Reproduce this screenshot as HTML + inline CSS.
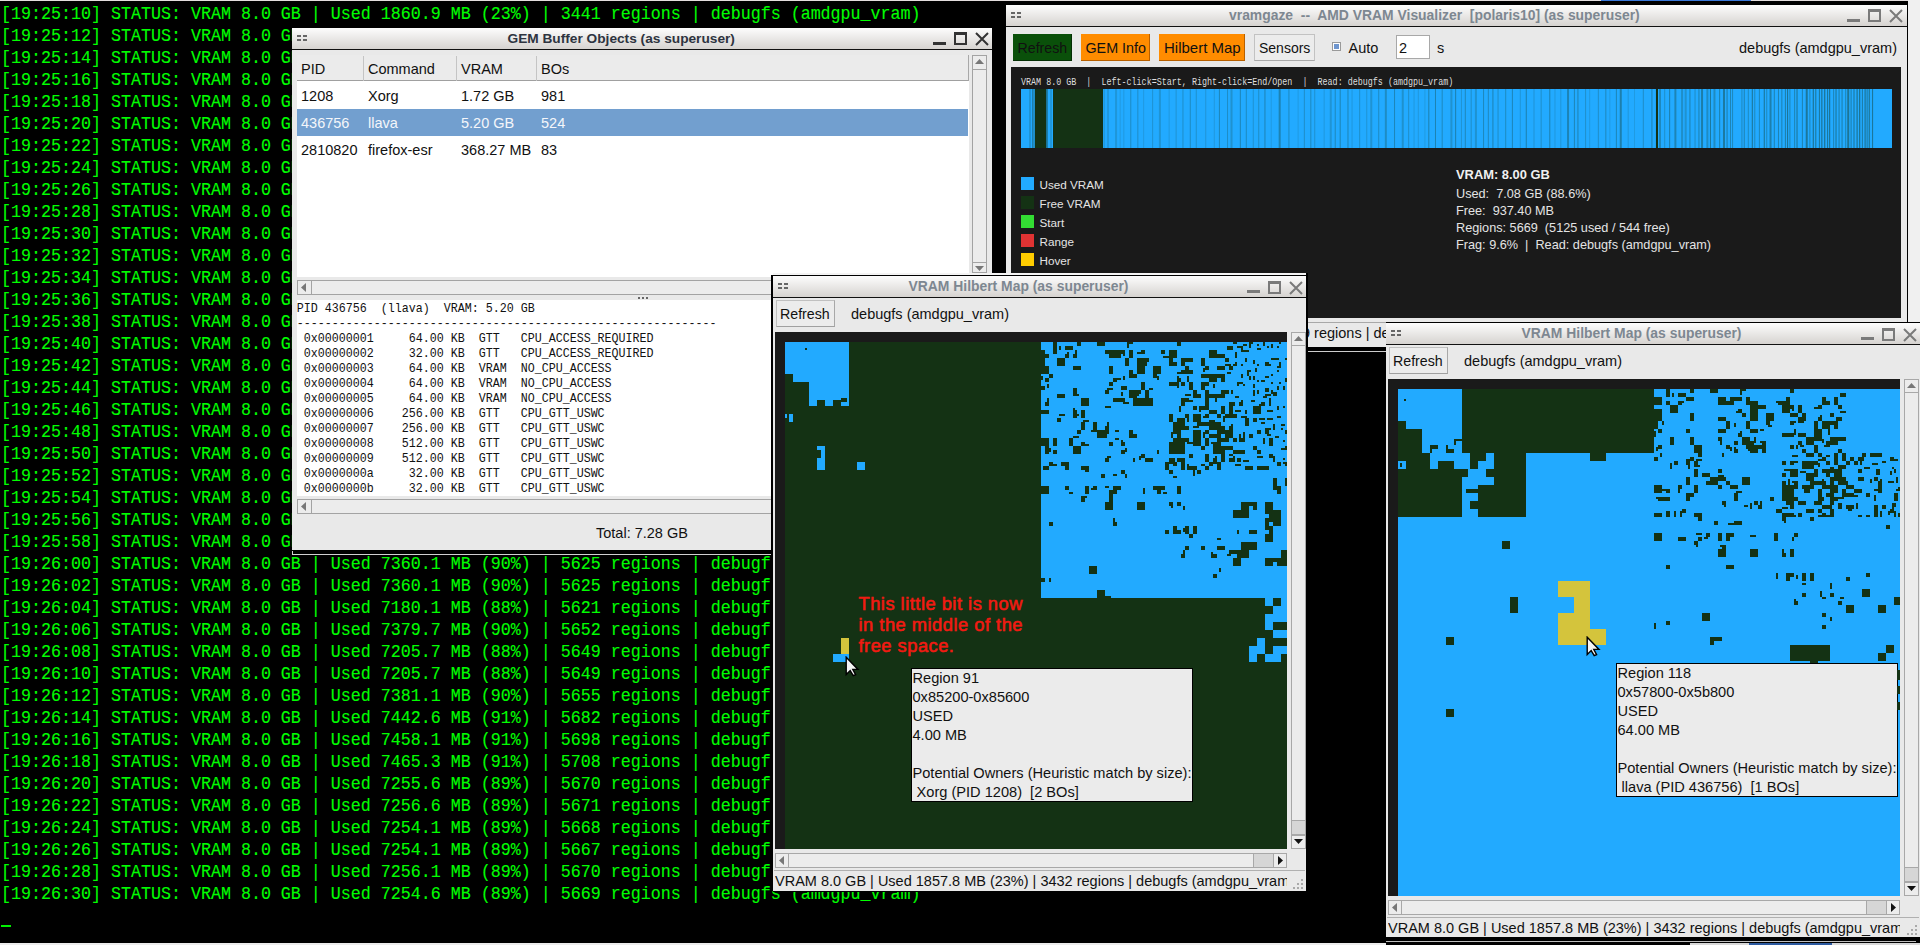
<!DOCTYPE html><html><head><meta charset="utf-8"><style>
*{margin:0;padding:0;box-sizing:border-box}
html,body{width:1920px;height:945px;overflow:hidden;background:#000}
body{position:relative;font-family:"Liberation Sans",sans-serif}
.abs{position:absolute}
.t{position:absolute;white-space:pre}
.m{font-family:"Liberation Mono",monospace}
#term div{position:absolute;left:1px;font-family:"Liberation Mono",monospace;font-size:16.67px;line-height:18.64px;color:#00ff00;white-space:pre;transform:scaleY(1.12);transform-origin:0 13.76px;-webkit-text-stroke:0.1px #00ff00}
.win{position:absolute;background:#e9e9e9;overflow:hidden}
.tb{position:absolute;left:0;right:0;top:0;height:22px;background:linear-gradient(#fdfdfd,#d6d3d0);border-bottom:1px solid #111}
.grip{position:absolute;left:5px;top:7px;width:11px;height:6px}
.grip i{position:absolute;width:4px;height:2px;background:#666}
.sb{position:absolute;background:#ececec;border:1px solid #a3a3a3}
</style></head><body><div id="term"><div style="top:6.48px">[19:25:10] STATUS: VRAM 8.0 GB | Used 1860.9 MB (23%) | 3441 regions | debugfs (amdgpu_vram)</div><div style="top:28.48px">[19:25:12] STATUS: VRAM 8.0 GB | Used 1860.9 MB (23%) | 3441 regions | debugfs (amdgpu_vram)</div><div style="top:50.48px">[19:25:14] STATUS: VRAM 8.0 GB | Used 1860.9 MB (23%) | 3441 regions | debugfs (amdgpu_vram)</div><div style="top:72.48px">[19:25:16] STATUS: VRAM 8.0 GB | Used 1860.9 MB (23%) | 3441 regions | debugfs (amdgpu_vram)</div><div style="top:94.48px">[19:25:18] STATUS: VRAM 8.0 GB | Used 1860.9 MB (23%) | 3441 regions | debugfs (amdgpu_vram)</div><div style="top:116.48px">[19:25:20] STATUS: VRAM 8.0 GB | Used 1860.9 MB (23%) | 3441 regions | debugfs (amdgpu_vram)</div><div style="top:138.48px">[19:25:22] STATUS: VRAM 8.0 GB | Used 1860.9 MB (23%) | 3441 regions | debugfs (amdgpu_vram)</div><div style="top:160.48px">[19:25:24] STATUS: VRAM 8.0 GB | Used 1860.9 MB (23%) | 3441 regions | debugfs (amdgpu_vram)</div><div style="top:182.48px">[19:25:26] STATUS: VRAM 8.0 GB | Used 1860.9 MB (23%) | 3441 regions | debugfs (amdgpu_vram)</div><div style="top:204.48px">[19:25:28] STATUS: VRAM 8.0 GB | Used 1860.9 MB (23%) | 3441 regions | debugfs (amdgpu_vram)</div><div style="top:226.48px">[19:25:30] STATUS: VRAM 8.0 GB | Used 1860.9 MB (23%) | 3441 regions | debugfs (amdgpu_vram)</div><div style="top:248.48px">[19:25:32] STATUS: VRAM 8.0 GB | Used 1860.9 MB (23%) | 3441 regions | debugfs (amdgpu_vram)</div><div style="top:270.48px">[19:25:34] STATUS: VRAM 8.0 GB | Used 1860.9 MB (23%) | 3441 regions | debugfs (amdgpu_vram)</div><div style="top:292.48px">[19:25:36] STATUS: VRAM 8.0 GB | Used 1860.9 MB (23%) | 3441 regions | debugfs (amdgpu_vram)</div><div style="top:314.48px">[19:25:38] STATUS: VRAM 8.0 GB | Used 1860.9 MB (23%) | 3441 regions | debugfs (amdgpu_vram)</div><div style="top:336.48px">[19:25:40] STATUS: VRAM 8.0 GB | Used 1860.9 MB (23%) | 3441 regions | debugfs (amdgpu_vram)</div><div style="top:358.48px">[19:25:42] STATUS: VRAM 8.0 GB | Used 1860.9 MB (23%) | 3441 regions | debugfs (amdgpu_vram)</div><div style="top:380.48px">[19:25:44] STATUS: VRAM 8.0 GB | Used 1860.9 MB (23%) | 3441 regions | debugfs (amdgpu_vram)</div><div style="top:402.48px">[19:25:46] STATUS: VRAM 8.0 GB | Used 1860.9 MB (23%) | 3441 regions | debugfs (amdgpu_vram)</div><div style="top:424.48px">[19:25:48] STATUS: VRAM 8.0 GB | Used 1860.9 MB (23%) | 3441 regions | debugfs (amdgpu_vram)</div><div style="top:446.48px">[19:25:50] STATUS: VRAM 8.0 GB | Used 1860.9 MB (23%) | 3441 regions | debugfs (amdgpu_vram)</div><div style="top:468.48px">[19:25:52] STATUS: VRAM 8.0 GB | Used 1860.9 MB (23%) | 3441 regions | debugfs (amdgpu_vram)</div><div style="top:490.48px">[19:25:54] STATUS: VRAM 8.0 GB | Used 1860.9 MB (23%) | 3441 regions | debugfs (amdgpu_vram)</div><div style="top:512.48px">[19:25:56] STATUS: VRAM 8.0 GB | Used 1860.9 MB (23%) | 3441 regions | debugfs (amdgpu_vram)</div><div style="top:534.48px">[19:25:58] STATUS: VRAM 8.0 GB | Used 1860.9 MB (23%) | 3441 regions | debugfs (amdgpu_vram)</div><div style="top:556.48px">[19:26:00] STATUS: VRAM 8.0 GB | Used 7360.1 MB (90%) | 5625 regions | debugfs (amdgpu_vram)</div><div style="top:578.48px">[19:26:02] STATUS: VRAM 8.0 GB | Used 7360.1 MB (90%) | 5625 regions | debugfs (amdgpu_vram)</div><div style="top:600.48px">[19:26:04] STATUS: VRAM 8.0 GB | Used 7180.1 MB (88%) | 5621 regions | debugfs (amdgpu_vram)</div><div style="top:622.48px">[19:26:06] STATUS: VRAM 8.0 GB | Used 7379.7 MB (90%) | 5652 regions | debugfs (amdgpu_vram)</div><div style="top:644.48px">[19:26:08] STATUS: VRAM 8.0 GB | Used 7205.7 MB (88%) | 5649 regions | debugfs (amdgpu_vram)</div><div style="top:666.48px">[19:26:10] STATUS: VRAM 8.0 GB | Used 7205.7 MB (88%) | 5649 regions | debugfs (amdgpu_vram)</div><div style="top:688.48px">[19:26:12] STATUS: VRAM 8.0 GB | Used 7381.1 MB (90%) | 5655 regions | debugfs (amdgpu_vram)</div><div style="top:710.48px">[19:26:14] STATUS: VRAM 8.0 GB | Used 7442.6 MB (91%) | 5682 regions | debugfs (amdgpu_vram)</div><div style="top:732.48px">[19:26:16] STATUS: VRAM 8.0 GB | Used 7458.1 MB (91%) | 5698 regions | debugfs (amdgpu_vram)</div><div style="top:754.48px">[19:26:18] STATUS: VRAM 8.0 GB | Used 7465.3 MB (91%) | 5708 regions | debugfs (amdgpu_vram)</div><div style="top:776.48px">[19:26:20] STATUS: VRAM 8.0 GB | Used 7255.6 MB (89%) | 5670 regions | debugfs (amdgpu_vram)</div><div style="top:798.48px">[19:26:22] STATUS: VRAM 8.0 GB | Used 7256.6 MB (89%) | 5671 regions | debugfs (amdgpu_vram)</div><div style="top:820.48px">[19:26:24] STATUS: VRAM 8.0 GB | Used 7254.1 MB (89%) | 5668 regions | debugfs (amdgpu_vram)</div><div style="top:842.48px">[19:26:26] STATUS: VRAM 8.0 GB | Used 7254.1 MB (89%) | 5667 regions | debugfs (amdgpu_vram)</div><div style="top:864.48px">[19:26:28] STATUS: VRAM 8.0 GB | Used 7256.1 MB (89%) | 5670 regions | debugfs (amdgpu_vram)</div><div style="top:886.48px">[19:26:30] STATUS: VRAM 8.0 GB | Used 7254.6 MB (89%) | 5669 regions | debugfs (amdgpu_vram)</div></div>
<div class="abs" style="left:1px;top:925px;width:10px;height:1.5px;background:#00f000"></div>
<div class="abs" style="left:0px;top:943px;width:1920px;height:2px;background:#ececec"></div>
<div class="abs" style="left:0px;top:0px;width:1920px;height:1px;background:#e4dede"></div>
<div class="abs" style="left:1601px;top:0px;width:150px;height:1px;background:#3a78d8"></div>
<div class="win" style="left:292px;top:28px;width:700px;height:522px">
<div class="tb" style="height:22px"><div class="grip"><i style="left:0;top:0"></i><i style="left:6px;top:0"></i><i style="left:0;top:4px"></i><i style="left:6px;top:4px"></i></div></div>
<div class="t" style="left:215.5px;top:4.40px;font-size:13.7px;line-height:13.7px;color:#2e3440;font-weight:bold;">GEM Buffer Objects (as superuser)</div>
<div class="abs" style="left:641px;top:14px;width:13px;height:3px;background:#333"></div>
<div class="abs" style="left:662px;top:4px;width:13px;height:13px;border:2px solid #333;border-top-width:3px"></div>
<svg class="abs" style="left:683px;top:4px" width="14" height="14"><path d="M1 1L13 13M13 1L1 13" stroke="#333" stroke-width="2"/></svg>
<div class="abs" style="left:5px;top:27px;width:672px;height:222px;background:#fff"></div>
<div class="abs" style="left:5px;top:27px;width:672px;height:26px;background:#ebebeb;border-bottom:1px solid #a0a0a0;border-right:1px solid #a8a8a8"></div>
<div class="abs" style="left:71px;top:28px;width:1px;height:25px;background:#c4c4c4"></div>
<div class="abs" style="left:164px;top:28px;width:1px;height:25px;background:#c4c4c4"></div>
<div class="abs" style="left:244px;top:28px;width:1px;height:25px;background:#c4c4c4"></div>
<div class="abs" style="left:5px;top:81px;width:671px;height:27px;background:#729fcf"></div>
<div class="t" style="left:9px;top:33.73px;font-size:14.5px;line-height:14.5px;color:#111;font-weight:normal;">PID</div>
<div class="t" style="left:76px;top:33.73px;font-size:14.5px;line-height:14.5px;color:#111;font-weight:normal;">Command</div>
<div class="t" style="left:169px;top:33.73px;font-size:14.5px;line-height:14.5px;color:#111;font-weight:normal;">VRAM</div>
<div class="t" style="left:249px;top:33.73px;font-size:14.5px;line-height:14.5px;color:#111;font-weight:normal;">BOs</div>
<div class="t" style="left:9px;top:60.73px;font-size:14.5px;line-height:14.5px;color:#111;font-weight:normal;">1208</div>
<div class="t" style="left:76px;top:60.73px;font-size:14.5px;line-height:14.5px;color:#111;font-weight:normal;">Xorg</div>
<div class="t" style="left:169px;top:60.73px;font-size:14.5px;line-height:14.5px;color:#111;font-weight:normal;">1.72 GB</div>
<div class="t" style="left:249px;top:60.73px;font-size:14.5px;line-height:14.5px;color:#111;font-weight:normal;">981</div>
<div class="t" style="left:9px;top:87.73px;font-size:14.5px;line-height:14.5px;color:#f4f6fa;font-weight:normal;">436756</div>
<div class="t" style="left:76px;top:87.73px;font-size:14.5px;line-height:14.5px;color:#f4f6fa;font-weight:normal;">llava</div>
<div class="t" style="left:169px;top:87.73px;font-size:14.5px;line-height:14.5px;color:#f4f6fa;font-weight:normal;">5.20 GB</div>
<div class="t" style="left:249px;top:87.73px;font-size:14.5px;line-height:14.5px;color:#f4f6fa;font-weight:normal;">524</div>
<div class="t" style="left:9px;top:114.73px;font-size:14.5px;line-height:14.5px;color:#111;font-weight:normal;">2810820</div>
<div class="t" style="left:76px;top:114.73px;font-size:14.5px;line-height:14.5px;color:#111;font-weight:normal;">firefox-esr</div>
<div class="t" style="left:169px;top:114.73px;font-size:14.5px;line-height:14.5px;color:#111;font-weight:normal;">368.27 MB</div>
<div class="t" style="left:249px;top:114.73px;font-size:14.5px;line-height:14.5px;color:#111;font-weight:normal;">83</div>
<div class="abs" style="left:680px;top:27px;width:15px;height:218px;background:#ececec;border:1px solid #a3a3a3"></div>
<div class="abs" style="left:680px;top:41px;width:15px;height:1px;background:#a3a3a3"></div>
<div class="abs" style="left:680px;top:234px;width:15px;height:1px;background:#a3a3a3"></div>
<svg class="abs" style="left:683px;top:31px" width="9" height="6"><path d="M0 5L4.5 0L9 5Z" fill="#777"/></svg>
<svg class="abs" style="left:683px;top:238px" width="9" height="6"><path d="M0 0L4.5 5L9 0Z" fill="#777"/></svg>
<div class="abs" style="left:5px;top:252px;width:672px;height:15px;background:#ececec;border:1px solid #a3a3a3"></div>
<div class="abs" style="left:19px;top:252px;width:1px;height:15px;background:#a3a3a3"></div>
<svg class="abs" style="left:9px;top:255px" width="6" height="9"><path d="M5 0L0 4.5L5 9Z" fill="#777"/></svg>
<div class="abs" style="left:346px;top:269px;width:2px;height:2px;background:#666"></div>
<div class="abs" style="left:350px;top:269px;width:2px;height:2px;background:#666"></div>
<div class="abs" style="left:354px;top:269px;width:2px;height:2px;background:#666"></div>
<div class="abs" style="left:5px;top:272px;width:480px;height:196px;background:#fff"></div>
<div class="t m" style="left:4.850000000000023px;top:276.36px;font-size:11.67px;line-height:11.67px;color:#111;transform:scaleY(1.1);transform-origin:0 80%">PID 436756  (llava)  VRAM: 5.20 GB</div>
<div class="t m" style="left:4.850000000000023px;top:291.36px;font-size:11.67px;line-height:11.67px;color:#111;transform:scaleY(1.1);transform-origin:0 80%">------------------------------------------------------------</div>
<div class="t m" style="left:4.850000000000023px;top:306.36px;font-size:11.67px;line-height:11.67px;color:#111;transform:scaleY(1.1);transform-origin:0 80%"> 0x00000001     64.00 KB  GTT   CPU_ACCESS_REQUIRED</div>
<div class="t m" style="left:4.850000000000023px;top:321.36px;font-size:11.67px;line-height:11.67px;color:#111;transform:scaleY(1.1);transform-origin:0 80%"> 0x00000002     32.00 KB  GTT   CPU_ACCESS_REQUIRED</div>
<div class="t m" style="left:4.850000000000023px;top:336.36px;font-size:11.67px;line-height:11.67px;color:#111;transform:scaleY(1.1);transform-origin:0 80%"> 0x00000003     64.00 KB  VRAM  NO_CPU_ACCESS</div>
<div class="t m" style="left:4.850000000000023px;top:351.36px;font-size:11.67px;line-height:11.67px;color:#111;transform:scaleY(1.1);transform-origin:0 80%"> 0x00000004     64.00 KB  VRAM  NO_CPU_ACCESS</div>
<div class="t m" style="left:4.850000000000023px;top:366.36px;font-size:11.67px;line-height:11.67px;color:#111;transform:scaleY(1.1);transform-origin:0 80%"> 0x00000005     64.00 KB  VRAM  NO_CPU_ACCESS</div>
<div class="t m" style="left:4.850000000000023px;top:381.36px;font-size:11.67px;line-height:11.67px;color:#111;transform:scaleY(1.1);transform-origin:0 80%"> 0x00000006    256.00 KB  GTT   CPU_GTT_USWC</div>
<div class="t m" style="left:4.850000000000023px;top:396.36px;font-size:11.67px;line-height:11.67px;color:#111;transform:scaleY(1.1);transform-origin:0 80%"> 0x00000007    256.00 KB  GTT   CPU_GTT_USWC</div>
<div class="t m" style="left:4.850000000000023px;top:411.36px;font-size:11.67px;line-height:11.67px;color:#111;transform:scaleY(1.1);transform-origin:0 80%"> 0x00000008    512.00 KB  GTT   CPU_GTT_USWC</div>
<div class="t m" style="left:4.850000000000023px;top:426.36px;font-size:11.67px;line-height:11.67px;color:#111;transform:scaleY(1.1);transform-origin:0 80%"> 0x00000009    512.00 KB  GTT   CPU_GTT_USWC</div>
<div class="t m" style="left:4.850000000000023px;top:441.36px;font-size:11.67px;line-height:11.67px;color:#111;transform:scaleY(1.1);transform-origin:0 80%"> 0x0000000a     32.00 KB  GTT   CPU_GTT_USWC</div>
<div class="t m" style="left:4.850000000000023px;top:456.36px;font-size:11.67px;line-height:11.67px;color:#111;transform:scaleY(1.1);transform-origin:0 80%"> 0x0000000b     32.00 KB  GTT   CPU_GTT_USWC</div>
<div class="abs" style="left:5px;top:471px;width:480px;height:15px;background:#ececec;border:1px solid #a3a3a3"></div>
<div class="abs" style="left:19px;top:471px;width:1px;height:15px;background:#a3a3a3"></div>
<svg class="abs" style="left:9px;top:474px" width="6" height="9"><path d="M5 0L0 4.5L5 9Z" fill="#777"/></svg>
<div class="t" style="left:304px;top:497.73px;font-size:14.5px;line-height:14.5px;color:#111;font-weight:normal;">Total: 7.28 GB</div>
</div>
<div class="abs" style="left:292px;top:550px;width:700px;height:4px;background:#000"></div>
<div class="abs" style="left:292px;top:554px;width:700px;height:1px;background:#d0d0d0"></div>
<div class="abs" style="left:292px;top:551px;width:1px;height:4px;background:#d0d0d0"></div>
<div class="win" style="left:1006px;top:5px;width:901px;height:342px">
<div class="tb" style="height:22px"><div class="grip"><i style="left:0;top:0"></i><i style="left:6px;top:0"></i><i style="left:0;top:4px"></i><i style="left:6px;top:4px"></i></div></div>
<div class="t" style="left:223px;top:4.23px;font-size:13.9px;line-height:13.9px;color:#7d8791;font-weight:bold;">vramgaze  --  AMD VRAM Visualizer  [polaris10] (as superuser)</div>
<div class="abs" style="left:841px;top:14px;width:13px;height:3px;background:#7a7a7a"></div>
<div class="abs" style="left:862px;top:4px;width:13px;height:13px;border:2px solid #7a7a7a;border-top-width:3px"></div>
<svg class="abs" style="left:883px;top:4px" width="14" height="14"><path d="M1 1L13 13M13 1L1 13" stroke="#7a7a7a" stroke-width="2"/></svg>
<div class="abs" style="left:7px;top:29px;width:59px;height:27px;background:#0a500a;border-right:1px solid #053005;border-bottom:1px solid #053005"></div>
<div class="t" style="left:11.5px;top:35.98px;font-size:14.2px;line-height:14.2px;color:#111;font-weight:normal;">Refresh</div>
<div class="abs" style="left:75px;top:29px;width:69px;height:27px;background:#ff8c00;border-right:1px solid #b86000;border-bottom:1px solid #b86000"></div>
<div class="t" style="left:79.5px;top:35.90px;font-size:14.3px;line-height:14.3px;color:#111;font-weight:normal;">GEM Info</div>
<div class="abs" style="left:153px;top:29px;width:86px;height:27px;background:#ff8c00;border-right:1px solid #b86000;border-bottom:1px solid #b86000"></div>
<div class="t" style="left:158px;top:35.30px;font-size:15px;line-height:15px;color:#111;font-weight:normal;">Hilbert Map</div>
<div class="abs" style="left:248px;top:29px;width:61px;height:27px;background:#ececec;border:1px solid #c2c2c2;border-bottom-color:#a8a8a8"></div>
<div class="t" style="left:253px;top:36.15px;font-size:14.0px;line-height:14.0px;color:#111;font-weight:normal;">Sensors</div>
<div class="abs" style="left:326px;top:37px;width:9px;height:9px;background:#fff;border:1px solid #9a9a9a"></div>
<div class="abs" style="left:328px;top:39px;width:5px;height:5px;background:#6f96cf"></div>
<div class="t" style="left:342.5px;top:35.73px;font-size:14.5px;line-height:14.5px;color:#111;font-weight:normal;">Auto</div>
<div class="abs" style="left:390px;top:30px;width:34px;height:24px;background:#fff;border:1px solid #a8a8a8"></div>
<div class="t" style="left:393px;top:35.73px;font-size:14.5px;line-height:14.5px;color:#111;font-weight:normal;">2</div>
<div class="t" style="left:431px;top:35.73px;font-size:14.5px;line-height:14.5px;color:#111;font-weight:normal;">s</div>
<div class="t" style="left:891px;top:35.73px;font-size:14.5px;line-height:14.5px;color:#111;font-weight:normal;transform:translateX(-100%)">debugfs (amdgpu_vram)</div>
<div class="abs" style="left:5px;top:62px;width:890px;height:251px;background:#1a1a1a"></div>
<div class="t m" style="left:15px;top:73.06px;font-size:8.4px;line-height:8.4px;color:#dedede;transform:translateY(0.7px) scaleY(1.25);transform-origin:0 80%">VRAM 8.0 GB  |  Left-click=Start, Right-click=End/Open  |  Read: debugfs (amdgpu_vram)</div>
<svg class="abs" style="left:15px;top:84px" width="871" height="59"><rect x="0" y="0" width="871" height="59" fill="#22aaff"/><rect x="14.00" y="0" width="11.00" height="59" fill="#143214" fill-opacity="1.00"/><rect x="32.00" y="0" width="50.00" height="59" fill="#143214" fill-opacity="1.00"/><rect x="635.00" y="0" width="2.00" height="59" fill="#143214" fill-opacity="1.00"/><rect x="8.50" y="0" width="1.00" height="59" fill="#143214" fill-opacity="0.35"/><rect x="11.00" y="0" width="1.00" height="59" fill="#143214" fill-opacity="0.35"/><rect x="12.50" y="0" width="1.00" height="59" fill="#143214" fill-opacity="0.45"/><rect x="25.00" y="0" width="1.00" height="59" fill="#143214" fill-opacity="0.45"/><rect x="26.00" y="0" width="1.00" height="59" fill="#143214" fill-opacity="0.35"/><rect x="29.50" y="0" width="1.00" height="59" fill="#143214" fill-opacity="0.30"/><rect x="82.65" y="0" width="1.00" height="59" fill="#143214" fill-opacity="0.20"/><rect x="85.99" y="0" width="2.00" height="59" fill="#143214" fill-opacity="0.14"/><rect x="94.07" y="0" width="2.00" height="59" fill="#143214" fill-opacity="0.16"/><rect x="98.67" y="0" width="1.00" height="59" fill="#143214" fill-opacity="0.13"/><rect x="102.30" y="0" width="1.00" height="59" fill="#143214" fill-opacity="0.13"/><rect x="109.26" y="0" width="1.00" height="59" fill="#143214" fill-opacity="0.25"/><rect x="116.34" y="0" width="1.00" height="59" fill="#143214" fill-opacity="0.24"/><rect x="122.12" y="0" width="1.00" height="59" fill="#143214" fill-opacity="0.13"/><rect x="131.13" y="0" width="1.00" height="59" fill="#143214" fill-opacity="0.20"/><rect x="137.91" y="0" width="2.00" height="59" fill="#143214" fill-opacity="0.18"/><rect x="147.62" y="0" width="1.00" height="59" fill="#143214" fill-opacity="0.14"/><rect x="154.62" y="0" width="1.00" height="59" fill="#143214" fill-opacity="0.19"/><rect x="161.46" y="0" width="1.00" height="59" fill="#143214" fill-opacity="0.23"/><rect x="168.79" y="0" width="1.00" height="59" fill="#143214" fill-opacity="0.26"/><rect x="174.78" y="0" width="1.00" height="59" fill="#143214" fill-opacity="0.21"/><rect x="184.25" y="0" width="1.00" height="59" fill="#143214" fill-opacity="0.18"/><rect x="192.81" y="0" width="1.00" height="59" fill="#143214" fill-opacity="0.14"/><rect x="197.91" y="0" width="1.00" height="59" fill="#143214" fill-opacity="0.30"/><rect x="206.02" y="0" width="1.00" height="59" fill="#143214" fill-opacity="0.24"/><rect x="209.53" y="0" width="2.00" height="59" fill="#143214" fill-opacity="0.20"/><rect x="218.83" y="0" width="1.00" height="59" fill="#143214" fill-opacity="0.31"/><rect x="224.78" y="0" width="1.00" height="59" fill="#143214" fill-opacity="0.27"/><rect x="231.79" y="0" width="1.00" height="59" fill="#143214" fill-opacity="0.19"/><rect x="237.24" y="0" width="1.00" height="59" fill="#143214" fill-opacity="0.24"/><rect x="243.44" y="0" width="1.00" height="59" fill="#143214" fill-opacity="0.31"/><rect x="249.75" y="0" width="1.00" height="59" fill="#143214" fill-opacity="0.13"/><rect x="257.67" y="0" width="2.00" height="59" fill="#143214" fill-opacity="0.32"/><rect x="267.42" y="0" width="1.00" height="59" fill="#143214" fill-opacity="0.26"/><rect x="276.63" y="0" width="1.00" height="59" fill="#143214" fill-opacity="0.12"/><rect x="282.86" y="0" width="1.00" height="59" fill="#143214" fill-opacity="0.24"/><rect x="289.32" y="0" width="1.00" height="59" fill="#143214" fill-opacity="0.27"/><rect x="293.22" y="0" width="1.00" height="59" fill="#143214" fill-opacity="0.20"/><rect x="302.64" y="0" width="1.00" height="59" fill="#143214" fill-opacity="0.14"/><rect x="308.78" y="0" width="2.00" height="59" fill="#143214" fill-opacity="0.18"/><rect x="313.74" y="0" width="1.00" height="59" fill="#143214" fill-opacity="0.29"/><rect x="318.69" y="0" width="1.00" height="59" fill="#143214" fill-opacity="0.32"/><rect x="326.47" y="0" width="1.00" height="59" fill="#143214" fill-opacity="0.31"/><rect x="330.53" y="0" width="1.00" height="59" fill="#143214" fill-opacity="0.15"/><rect x="338.14" y="0" width="1.00" height="59" fill="#143214" fill-opacity="0.22"/><rect x="345.26" y="0" width="1.00" height="59" fill="#143214" fill-opacity="0.18"/><rect x="349.28" y="0" width="2.00" height="59" fill="#143214" fill-opacity="0.19"/><rect x="357.24" y="0" width="1.00" height="59" fill="#143214" fill-opacity="0.26"/><rect x="363.85" y="0" width="2.00" height="59" fill="#143214" fill-opacity="0.25"/><rect x="373.03" y="0" width="1.00" height="59" fill="#143214" fill-opacity="0.30"/><rect x="380.75" y="0" width="2.00" height="59" fill="#143214" fill-opacity="0.21"/><rect x="387.14" y="0" width="1.00" height="59" fill="#143214" fill-opacity="0.23"/><rect x="392.55" y="0" width="1.00" height="59" fill="#143214" fill-opacity="0.14"/><rect x="396.80" y="0" width="1.00" height="59" fill="#143214" fill-opacity="0.15"/><rect x="403.40" y="0" width="1.00" height="59" fill="#143214" fill-opacity="0.12"/><rect x="407.31" y="0" width="1.00" height="59" fill="#143214" fill-opacity="0.34"/><rect x="413.99" y="0" width="1.00" height="59" fill="#143214" fill-opacity="0.32"/><rect x="420.68" y="0" width="1.00" height="59" fill="#143214" fill-opacity="0.27"/><rect x="429.41" y="0" width="2.00" height="59" fill="#143214" fill-opacity="0.20"/><rect x="434.15" y="0" width="1.00" height="59" fill="#143214" fill-opacity="0.35"/><rect x="439.94" y="0" width="1.00" height="59" fill="#143214" fill-opacity="0.19"/><rect x="443.81" y="0" width="1.00" height="59" fill="#143214" fill-opacity="0.29"/><rect x="449.68" y="0" width="1.00" height="59" fill="#143214" fill-opacity="0.24"/><rect x="453.91" y="0" width="2.00" height="59" fill="#143214" fill-opacity="0.20"/><rect x="462.05" y="0" width="1.00" height="59" fill="#143214" fill-opacity="0.29"/><rect x="466.84" y="0" width="1.00" height="59" fill="#143214" fill-opacity="0.28"/><rect x="471.41" y="0" width="1.00" height="59" fill="#143214" fill-opacity="0.33"/><rect x="476.54" y="0" width="1.00" height="59" fill="#143214" fill-opacity="0.24"/><rect x="484.21" y="0" width="1.00" height="59" fill="#143214" fill-opacity="0.27"/><rect x="490.89" y="0" width="1.00" height="59" fill="#143214" fill-opacity="0.31"/><rect x="498.80" y="0" width="1.00" height="59" fill="#143214" fill-opacity="0.17"/><rect x="504.76" y="0" width="1.00" height="59" fill="#143214" fill-opacity="0.35"/><rect x="512.50" y="0" width="1.00" height="59" fill="#143214" fill-opacity="0.18"/><rect x="519.66" y="0" width="1.00" height="59" fill="#143214" fill-opacity="0.22"/><rect x="528.28" y="0" width="1.00" height="59" fill="#143214" fill-opacity="0.34"/><rect x="533.47" y="0" width="1.00" height="59" fill="#143214" fill-opacity="0.14"/><rect x="539.29" y="0" width="1.00" height="59" fill="#143214" fill-opacity="0.17"/><rect x="546.03" y="0" width="2.00" height="59" fill="#143214" fill-opacity="0.31"/><rect x="552.91" y="0" width="1.00" height="59" fill="#143214" fill-opacity="0.30"/><rect x="556.42" y="0" width="1.00" height="59" fill="#143214" fill-opacity="0.33"/><rect x="564.11" y="0" width="1.00" height="59" fill="#143214" fill-opacity="0.23"/><rect x="568.18" y="0" width="1.00" height="59" fill="#143214" fill-opacity="0.14"/><rect x="576.86" y="0" width="1.00" height="59" fill="#143214" fill-opacity="0.23"/><rect x="584.32" y="0" width="1.00" height="59" fill="#143214" fill-opacity="0.29"/><rect x="588.34" y="0" width="1.00" height="59" fill="#143214" fill-opacity="0.13"/><rect x="594.88" y="0" width="1.00" height="59" fill="#143214" fill-opacity="0.31"/><rect x="598.76" y="0" width="2.00" height="59" fill="#143214" fill-opacity="0.35"/><rect x="606.70" y="0" width="1.00" height="59" fill="#143214" fill-opacity="0.16"/><rect x="612.99" y="0" width="1.00" height="59" fill="#143214" fill-opacity="0.12"/><rect x="621.82" y="0" width="1.00" height="59" fill="#143214" fill-opacity="0.24"/><rect x="630.42" y="0" width="1.00" height="59" fill="#143214" fill-opacity="0.35"/><rect x="634.59" y="0" width="0.41" height="59" fill="#143214" fill-opacity="0.13"/><rect x="638.00" y="0" width="2.00" height="59" fill="#143214" fill-opacity="0.28"/><rect x="643.18" y="0" width="1.00" height="59" fill="#143214" fill-opacity="0.22"/><rect x="648.14" y="0" width="1.00" height="59" fill="#143214" fill-opacity="0.37"/><rect x="653.40" y="0" width="2.00" height="59" fill="#143214" fill-opacity="0.31"/><rect x="660.07" y="0" width="2.00" height="59" fill="#143214" fill-opacity="0.23"/><rect x="663.68" y="0" width="2.00" height="59" fill="#143214" fill-opacity="0.20"/><rect x="668.44" y="0" width="1.00" height="59" fill="#143214" fill-opacity="0.35"/><rect x="673.54" y="0" width="1.00" height="59" fill="#143214" fill-opacity="0.24"/><rect x="677.44" y="0" width="1.00" height="59" fill="#143214" fill-opacity="0.34"/><rect x="680.04" y="0" width="2.00" height="59" fill="#143214" fill-opacity="0.37"/><rect x="685.37" y="0" width="2.00" height="59" fill="#143214" fill-opacity="0.26"/><rect x="688.94" y="0" width="1.00" height="59" fill="#143214" fill-opacity="0.44"/><rect x="692.46" y="0" width="2.00" height="59" fill="#143214" fill-opacity="0.26"/><rect x="698.15" y="0" width="1.00" height="59" fill="#143214" fill-opacity="0.36"/><rect x="701.98" y="0" width="2.00" height="59" fill="#143214" fill-opacity="0.40"/><rect x="705.58" y="0" width="1.00" height="59" fill="#143214" fill-opacity="0.36"/><rect x="709.18" y="0" width="0.82" height="59" fill="#143214" fill-opacity="0.38"/><rect x="711.05" y="0" width="1.00" height="59" fill="#143214" fill-opacity="0.29"/><rect x="720.41" y="0" width="1.00" height="59" fill="#143214" fill-opacity="0.28"/><rect x="722.77" y="0" width="1.00" height="59" fill="#143214" fill-opacity="0.33"/><rect x="726.78" y="0" width="1.00" height="59" fill="#143214" fill-opacity="0.27"/><rect x="730.79" y="0" width="1.00" height="59" fill="#143214" fill-opacity="0.47"/><rect x="733.26" y="0" width="1.00" height="59" fill="#143214" fill-opacity="0.29"/><rect x="737.90" y="0" width="1.00" height="59" fill="#143214" fill-opacity="0.30"/><rect x="742.76" y="0" width="1.00" height="59" fill="#143214" fill-opacity="0.47"/><rect x="745.25" y="0" width="1.00" height="59" fill="#143214" fill-opacity="0.29"/><rect x="748.54" y="0" width="2.00" height="59" fill="#143214" fill-opacity="0.35"/><rect x="752.81" y="0" width="1.00" height="59" fill="#143214" fill-opacity="0.33"/><rect x="756.97" y="0" width="1.00" height="59" fill="#143214" fill-opacity="0.33"/><rect x="760.35" y="0" width="1.00" height="59" fill="#143214" fill-opacity="0.35"/><rect x="763.90" y="0" width="1.00" height="59" fill="#143214" fill-opacity="0.38"/><rect x="766.10" y="0" width="1.00" height="59" fill="#143214" fill-opacity="0.49"/><rect x="768.41" y="0" width="1.00" height="59" fill="#143214" fill-opacity="0.32"/><rect x="773.13" y="0" width="1.00" height="59" fill="#143214" fill-opacity="0.32"/><rect x="775.52" y="0" width="1.00" height="59" fill="#143214" fill-opacity="0.46"/><rect x="780.89" y="0" width="1.00" height="59" fill="#143214" fill-opacity="0.34"/><rect x="784.73" y="0" width="2.00" height="59" fill="#143214" fill-opacity="0.42"/><rect x="788.38" y="0" width="1.00" height="59" fill="#143214" fill-opacity="0.31"/><rect x="791.76" y="0" width="1.00" height="59" fill="#143214" fill-opacity="0.52"/><rect x="794.30" y="0" width="1.00" height="59" fill="#143214" fill-opacity="0.46"/><rect x="797.90" y="0" width="1.00" height="59" fill="#143214" fill-opacity="0.45"/><rect x="800.35" y="0" width="1.00" height="59" fill="#143214" fill-opacity="0.52"/><rect x="803.25" y="0" width="1.00" height="59" fill="#143214" fill-opacity="0.55"/><rect x="806.09" y="0" width="1.00" height="59" fill="#143214" fill-opacity="0.46"/><rect x="808.18" y="0" width="1.00" height="59" fill="#143214" fill-opacity="0.53"/><rect x="812.11" y="0" width="1.00" height="59" fill="#143214" fill-opacity="0.31"/><rect x="814.52" y="0" width="1.00" height="59" fill="#143214" fill-opacity="0.46"/><rect x="817.58" y="0" width="1.00" height="59" fill="#143214" fill-opacity="0.37"/><rect x="820.58" y="0" width="1.00" height="59" fill="#143214" fill-opacity="0.37"/><rect x="824.19" y="0" width="1.00" height="59" fill="#143214" fill-opacity="0.31"/><rect x="826.22" y="0" width="2.00" height="59" fill="#143214" fill-opacity="0.44"/><rect x="829.60" y="0" width="1.00" height="59" fill="#143214" fill-opacity="0.36"/><rect x="832.50" y="0" width="1.00" height="59" fill="#143214" fill-opacity="0.46"/><rect x="835.59" y="0" width="1.00" height="59" fill="#143214" fill-opacity="0.54"/><rect x="838.21" y="0" width="1.00" height="59" fill="#143214" fill-opacity="0.55"/><rect x="840.89" y="0" width="1.00" height="59" fill="#143214" fill-opacity="0.40"/><rect x="843.59" y="0" width="1.00" height="59" fill="#143214" fill-opacity="0.51"/><rect x="845.61" y="0" width="1.00" height="59" fill="#143214" fill-opacity="0.41"/><rect x="847.73" y="0" width="1.00" height="59" fill="#143214" fill-opacity="0.52"/><rect x="851.07" y="0" width="1.00" height="59" fill="#143214" fill-opacity="0.45"/></svg>
<div class="abs" style="left:15px;top:172px;width:13px;height:13px;background:#22aaff"></div>
<div class="t" style="left:33.5px;top:174.10px;font-size:11.7px;line-height:11.7px;color:#e4e4e4;font-weight:normal;">Used VRAM</div>
<div class="abs" style="left:15px;top:191px;width:13px;height:13px;background:#143214"></div>
<div class="t" style="left:33.5px;top:193.10px;font-size:11.7px;line-height:11.7px;color:#e4e4e4;font-weight:normal;">Free VRAM</div>
<div class="abs" style="left:15px;top:210px;width:13px;height:13px;background:#33dd33"></div>
<div class="t" style="left:33.5px;top:212.10px;font-size:11.7px;line-height:11.7px;color:#e4e4e4;font-weight:normal;">Start</div>
<div class="abs" style="left:15px;top:229px;width:13px;height:13px;background:#e03333"></div>
<div class="t" style="left:33.5px;top:231.10px;font-size:11.7px;line-height:11.7px;color:#e4e4e4;font-weight:normal;">Range</div>
<div class="abs" style="left:15px;top:248px;width:13px;height:13px;background:#ffcc00"></div>
<div class="t" style="left:33.5px;top:250.10px;font-size:11.7px;line-height:11.7px;color:#e4e4e4;font-weight:normal;">Hover</div>
<div class="t" style="left:450px;top:163.58px;font-size:12.9px;line-height:12.9px;color:#f0f0f0;font-weight:bold;">VRAM: 8.00 GB</div>
<div class="t" style="left:450px;top:183.25px;font-size:12.7px;line-height:12.7px;color:#e4e4e4;font-weight:normal;">Used:  7.08 GB (88.6%)</div>
<div class="t" style="left:450px;top:200.25px;font-size:12.7px;line-height:12.7px;color:#e4e4e4;font-weight:normal;">Free:  937.40 MB</div>
<div class="t" style="left:450px;top:217.25px;font-size:12.7px;line-height:12.7px;color:#e4e4e4;font-weight:normal;">Regions: 5669  (5125 used / 544 free)</div>
<div class="t" style="left:450px;top:234.25px;font-size:12.7px;line-height:12.7px;color:#e4e4e4;font-weight:normal;">Frag: 9.6%  |  Read: debugfs (amdgpu_vram)</div>
<div class="abs" style="left:5px;top:317px;width:890px;height:1px;background:#a8a8a8"></div>
<div class="t" style="left:296px;top:320.73px;font-size:14.5px;line-height:14.5px;color:#111;font-weight:normal;">9 regions | debugfs (amdgpu_vram)</div>
</div>
<div class="abs" style="left:1006px;top:347px;width:901px;height:3px;background:#000"></div>
<div class="abs" style="left:1006px;top:351px;width:901px;height:1px;background:#ccc"></div>
<div class="abs" style="left:1908px;top:0px;width:12px;height:322px;background:#f0f0f0"></div>
<div class="abs" style="left:773px;top:273px;width:534px;height:2px;background:#f4f4f4"></div>
<div class="abs" style="left:773px;top:275px;width:534px;height:1px;background:#000"></div>
<div class="abs" style="left:771px;top:275px;width:2px;height:616px;background:#000"></div>
<div class="win" style="left:773px;top:276px;width:533px;height:615px">
<div class="tb" style="height:22px"><div class="grip"><i style="left:0;top:0"></i><i style="left:6px;top:0"></i><i style="left:0;top:4px"></i><i style="left:6px;top:4px"></i></div></div>
<div class="t" style="left:135.5px;top:4.23px;font-size:13.9px;line-height:13.9px;color:#7d8791;font-weight:bold;">VRAM Hilbert Map (as superuser)</div>
<div class="abs" style="left:474px;top:14px;width:13px;height:3px;background:#7a7a7a"></div>
<div class="abs" style="left:495px;top:5px;width:13px;height:13px;border:2px solid #7a7a7a;border-top-width:3px"></div>
<svg class="abs" style="left:516px;top:5px" width="14" height="14"><path d="M1 1L13 13M13 1L1 13" stroke="#7a7a7a" stroke-width="2"/></svg>
<div class="abs" style="left:3px;top:24px;width:59px;height:27px;background:#ececec;border:1px solid #c0c0c0;border-bottom-color:#a0a0a0;border-right-color:#a8a8a8"></div>
<div class="t" style="left:7px;top:30.98px;font-size:14.2px;line-height:14.2px;color:#111;font-weight:normal;">Refresh</div>
<div class="t" style="left:78px;top:30.73px;font-size:14.5px;line-height:14.5px;color:#111;font-weight:normal;">debugfs (amdgpu_vram)</div>
<div class="abs" style="left:2px;top:56px;width:512px;height:517px;background:#1a1a1a"></div>
</div>
<svg class="abs" style="left:785px;top:342px" width="502" height="507" shape-rendering="crispEdges"><rect width="502" height="507" fill="#22aaff"/><path d="M64 0h192v2h-192zM268 0h4v2h-4zM292 0h4v2h-4zM312 0h8v2h-8zM342 0h6v2h-6zM392 0h4v2h-4zM448 0h4v2h-4zM464 0h4v2h-4zM478 0h2v2h-2zM494 0h2v2h-2zM64 2h192v2h-192zM268 2h4v2h-4zM292 2h4v2h-4zM312 2h8v2h-8zM342 2h2v2h-2zM392 2h4v2h-4zM458 2h4v2h-4zM464 2h2v2h-2zM472 2h2v2h-2zM478 2h2v2h-2zM486 2h2v2h-2zM64 4h192v2h-192zM268 4h4v2h-4zM274 4h2v2h-2zM280 4h8v2h-8zM342 4h2v2h-2zM442 4h6v2h-6zM452 4h6v2h-6zM464 4h2v2h-2zM482 4h2v2h-2zM486 4h2v2h-2zM492 4h2v2h-2zM20 6h2v2h-2zM64 6h192v2h-192zM268 6h4v2h-4zM274 6h2v2h-2zM280 6h8v2h-8zM442 6h6v2h-6zM456 6h2v2h-2zM472 6h4v2h-4zM64 8h196v2h-196zM268 8h4v2h-4zM290 8h2v2h-2zM320 8h20v2h-20zM344 8h4v2h-4zM356 8h4v2h-4zM376 8h4v2h-4zM384 8h8v2h-8zM424 8h8v2h-8zM456 8h8v2h-8zM64 10h196v2h-196zM268 10h4v2h-4zM282 10h2v2h-2zM290 10h2v2h-2zM320 10h20v2h-20zM344 10h4v2h-4zM352 10h8v2h-8zM376 10h4v2h-4zM384 10h8v2h-8zM424 10h8v2h-8zM450 10h2v2h-2zM64 12h200v2h-200zM280 12h4v2h-4zM288 12h4v2h-4zM324 12h12v2h-12zM338 12h2v2h-2zM344 12h4v2h-4zM384 12h8v2h-8zM424 12h16v2h-16zM450 12h2v2h-2zM64 14h200v2h-200zM280 14h4v2h-4zM288 14h4v2h-4zM324 14h12v2h-12zM344 14h4v2h-4zM378 14h14v2h-14zM424 14h16v2h-16zM450 14h2v2h-2zM64 16h196v2h-196zM272 16h8v2h-8zM340 16h4v2h-4zM352 16h12v2h-12zM384 16h4v2h-4zM396 16h12v2h-12zM416 16h4v2h-4zM440 16h4v2h-4zM460 16h2v2h-2zM486 16h8v2h-8zM500 16h2v2h-2zM64 18h196v2h-196zM272 18h8v2h-8zM340 18h4v2h-4zM352 18h12v2h-12zM384 18h4v2h-4zM396 18h12v2h-12zM416 18h4v2h-4zM440 18h4v2h-4zM460 18h2v2h-2zM468 18h2v2h-2zM64 20h196v2h-196zM272 20h8v2h-8zM340 20h4v2h-4zM352 20h10v2h-10zM384 20h8v2h-8zM396 20h4v2h-4zM416 20h4v2h-4zM450 20h2v2h-2zM468 20h2v2h-2zM480 20h4v2h-4zM494 20h2v2h-2zM64 22h196v2h-196zM272 22h8v2h-8zM340 22h4v2h-4zM352 22h10v2h-10zM384 22h8v2h-8zM396 22h4v2h-4zM416 22h4v2h-4zM440 22h6v2h-6zM448 22h4v2h-4zM456 22h2v2h-2zM472 22h2v2h-2zM480 22h6v2h-6zM494 22h2v2h-2zM64 24h200v2h-200zM288 24h8v2h-8zM324 24h4v2h-4zM352 24h8v2h-8zM368 24h8v2h-8zM400 24h4v2h-4zM420 24h4v2h-4zM432 24h8v2h-8zM444 24h4v2h-4zM492 24h4v2h-4zM64 26h200v2h-200zM288 26h8v2h-8zM324 26h4v2h-4zM352 26h8v2h-8zM368 26h8v2h-8zM400 26h4v2h-4zM418 26h6v2h-6zM432 26h8v2h-8zM444 26h4v2h-4zM470 26h2v2h-2zM64 28h200v2h-200zM324 28h4v2h-4zM344 28h4v2h-4zM352 28h8v2h-8zM368 28h8v2h-8zM396 28h12v2h-12zM418 28h2v2h-2zM462 28h4v2h-4zM470 28h2v2h-2zM492 28h2v2h-2zM64 30h200v2h-200zM324 30h4v2h-4zM344 30h4v2h-4zM352 30h8v2h-8zM368 30h8v2h-8zM392 30h16v2h-16zM442 30h4v2h-4zM462 30h2v2h-2zM0 32h8v2h-8zM64 32h192v2h-192zM264 32h4v2h-4zM344 32h8v2h-8zM368 32h4v2h-4zM416 32h24v2h-24zM456 32h2v2h-2zM462 32h2v2h-2zM486 32h2v2h-2zM0 34h8v2h-8zM64 34h194v2h-194zM264 34h4v2h-4zM338 34h2v2h-2zM344 34h8v2h-8zM368 34h6v2h-6zM392 34h2v2h-2zM402 34h2v2h-2zM416 34h24v2h-24zM456 34h2v2h-2zM464 34h2v2h-2zM468 34h2v2h-2zM480 34h4v2h-4zM0 36h8v2h-8zM64 36h194v2h-194zM260 36h4v2h-4zM328 36h8v2h-8zM338 36h2v2h-2zM372 36h2v2h-2zM392 36h4v2h-4zM402 36h2v2h-2zM424 36h8v2h-8zM436 36h4v2h-4zM464 36h2v2h-2zM468 36h2v2h-2zM500 36h2v2h-2zM0 38h8v2h-8zM64 38h192v2h-192zM260 38h4v2h-4zM328 38h4v2h-4zM392 38h4v2h-4zM402 38h2v2h-2zM424 38h8v2h-8zM436 38h4v2h-4zM472 38h2v2h-2zM476 38h4v2h-4zM500 38h2v2h-2zM0 40h24v2h-24zM64 40h192v2h-192zM324 40h4v2h-4zM356 40h4v2h-4zM384 40h10v2h-10zM396 40h4v2h-4zM404 40h4v2h-4zM416 40h8v2h-8zM452 40h6v2h-6zM486 40h2v2h-2zM494 40h2v2h-2zM0 42h24v2h-24zM64 42h192v2h-192zM262 42h2v2h-2zM324 42h4v2h-4zM356 42h4v2h-4zM384 42h10v2h-10zM396 42h4v2h-4zM404 42h4v2h-4zM416 42h8v2h-8zM428 42h2v2h-2zM452 42h2v2h-2zM458 42h2v2h-2zM468 42h2v2h-2zM0 44h24v2h-24zM64 44h196v2h-196zM262 44h2v2h-2zM336 44h6v2h-6zM356 44h4v2h-4zM392 44h2v2h-2zM404 44h4v2h-4zM416 44h4v2h-4zM428 44h2v2h-2zM468 44h2v2h-2zM492 44h2v2h-2zM498 44h2v2h-2zM0 46h24v2h-24zM64 46h196v2h-196zM288 46h4v2h-4zM322 46h6v2h-6zM336 46h6v2h-6zM356 46h4v2h-4zM364 46h4v2h-4zM404 46h4v2h-4zM416 46h4v2h-4zM480 46h4v2h-4zM492 46h2v2h-2zM498 46h2v2h-2zM0 48h24v2h-24zM64 48h192v2h-192zM288 48h4v2h-4zM320 48h4v2h-4zM344 48h12v2h-12zM360 48h4v2h-4zM408 48h4v2h-4zM420 48h4v2h-4zM436 48h8v2h-8zM446 48h2v2h-2zM468 48h2v2h-2zM472 48h2v2h-2zM480 48h4v2h-4zM486 48h2v2h-2zM0 50h24v2h-24zM64 50h192v2h-192zM288 50h4v2h-4zM320 50h4v2h-4zM336 50h2v2h-2zM344 50h12v2h-12zM360 50h4v2h-4zM408 50h4v2h-4zM420 50h4v2h-4zM436 50h8v2h-8zM446 50h2v2h-2zM468 50h2v2h-2zM472 50h2v2h-2zM486 50h6v2h-6zM0 52h24v2h-24zM64 52h192v2h-192zM272 52h8v2h-8zM288 52h6v2h-6zM336 52h2v2h-2zM344 52h10v2h-10zM360 52h4v2h-4zM400 52h6v2h-6zM408 52h8v2h-8zM420 52h20v2h-20zM468 52h2v2h-2zM480 52h6v2h-6zM488 52h4v2h-4zM0 54h24v2h-24zM64 54h192v2h-192zM272 54h8v2h-8zM344 54h8v2h-8zM360 54h4v2h-4zM408 54h8v2h-8zM420 54h20v2h-20zM450 54h4v2h-4zM478 54h4v2h-4zM0 56h24v2h-24zM56 56h6v2h-6zM64 56h192v2h-192zM262 56h2v2h-2zM296 56h8v2h-8zM328 56h12v2h-12zM348 56h20v2h-20zM396 56h8v2h-8zM420 56h4v2h-4zM430 56h2v2h-2zM484 56h2v2h-2zM0 58h24v2h-24zM32 58h8v2h-8zM48 58h14v2h-14zM64 58h192v2h-192zM262 58h2v2h-2zM296 58h8v2h-8zM328 58h12v2h-12zM348 58h20v2h-20zM396 58h12v2h-12zM420 58h4v2h-4zM430 58h2v2h-2zM456 58h2v2h-2zM466 58h4v2h-4zM484 58h2v2h-2zM0 60h24v2h-24zM32 60h8v2h-8zM48 60h8v2h-8zM64 60h192v2h-192zM260 60h4v2h-4zM296 60h8v2h-8zM338 60h6v2h-6zM348 60h20v2h-20zM396 60h4v2h-4zM420 60h4v2h-4zM444 60h6v2h-6zM454 60h4v2h-4zM476 60h4v2h-4zM484 60h2v2h-2zM0 62h24v2h-24zM32 62h8v2h-8zM48 62h8v2h-8zM64 62h192v2h-192zM260 62h4v2h-4zM296 62h8v2h-8zM348 62h20v2h-20zM396 62h4v2h-4zM420 62h4v2h-4zM444 62h6v2h-6zM454 62h4v2h-4zM474 62h6v2h-6zM484 62h2v2h-2zM0 64h256v2h-256zM320 64h6v2h-6zM394 64h2v2h-2zM408 64h4v2h-4zM414 64h10v2h-10zM436 64h4v2h-4zM444 64h4v2h-4zM468 64h8v2h-8zM492 64h2v2h-2zM498 64h2v2h-2zM0 66h256v2h-256zM288 66h2v2h-2zM394 66h2v2h-2zM408 66h4v2h-4zM414 66h10v2h-10zM436 66h4v2h-4zM444 66h4v2h-4zM468 66h8v2h-8zM492 66h2v2h-2zM0 68h264v2h-264zM288 68h4v2h-4zM296 68h4v2h-4zM394 68h2v2h-2zM414 68h2v2h-2zM424 68h8v2h-8zM436 68h4v2h-4zM444 68h4v2h-4zM450 68h6v2h-6zM460 68h2v2h-2zM468 68h8v2h-8zM482 68h6v2h-6zM0 70h264v2h-264zM288 70h4v2h-4zM296 70h4v2h-4zM424 70h8v2h-8zM436 70h4v2h-4zM444 70h4v2h-4zM460 70h2v2h-2zM468 70h8v2h-8zM2 72h2v2h-2zM8 72h248v2h-248zM274 72h6v2h-6zM288 72h6v2h-6zM296 72h4v2h-4zM384 72h4v2h-4zM400 72h4v2h-4zM408 72h8v2h-8zM420 72h4v2h-4zM432 72h4v2h-4zM440 72h12v2h-12zM2 74h2v2h-2zM8 74h248v2h-248zM288 74h4v2h-4zM296 74h4v2h-4zM384 74h4v2h-4zM400 74h4v2h-4zM408 74h8v2h-8zM418 74h6v2h-6zM432 74h4v2h-4zM438 74h14v2h-14zM456 74h6v2h-6zM492 74h4v2h-4zM0 76h4v2h-4zM8 76h248v2h-248zM272 76h4v2h-4zM384 76h4v2h-4zM392 76h8v2h-8zM402 76h2v2h-2zM408 76h8v2h-8zM438 76h2v2h-2zM460 76h4v2h-4zM468 76h4v2h-4zM474 76h6v2h-6zM482 76h6v2h-6zM0 78h4v2h-4zM8 78h248v2h-248zM272 78h4v2h-4zM298 78h6v2h-6zM384 78h4v2h-4zM392 78h8v2h-8zM402 78h2v2h-2zM408 78h8v2h-8zM424 78h6v2h-6zM438 78h2v2h-2zM460 78h4v2h-4zM468 78h4v2h-4zM0 80h256v2h-256zM296 80h4v2h-4zM308 80h4v2h-4zM322 80h2v2h-2zM388 80h12v2h-12zM412 80h24v2h-24zM460 80h4v2h-4zM476 80h4v2h-4zM0 82h256v2h-256zM296 82h4v2h-4zM308 82h4v2h-4zM322 82h2v2h-2zM388 82h12v2h-12zM412 82h24v2h-24zM446 82h2v2h-2zM460 82h4v2h-4zM488 82h2v2h-2zM496 82h4v2h-4zM0 84h256v2h-256zM296 84h4v2h-4zM308 84h4v2h-4zM320 84h4v2h-4zM388 84h16v2h-16zM408 84h6v2h-6zM424 84h16v2h-16zM444 84h4v2h-4zM488 84h2v2h-2zM0 86h256v2h-256zM296 86h4v2h-4zM308 86h4v2h-4zM320 86h4v2h-4zM388 86h16v2h-16zM424 86h16v2h-16zM444 86h4v2h-4zM480 86h6v2h-6zM488 86h2v2h-2zM496 86h2v2h-2zM0 88h256v2h-256zM292 88h4v2h-4zM306 88h18v2h-18zM330 88h4v2h-4zM344 88h4v2h-4zM388 88h8v2h-8zM408 88h8v2h-8zM420 88h4v2h-4zM432 88h16v2h-16zM472 88h4v2h-4zM480 88h4v2h-4zM500 88h2v2h-2zM0 90h256v2h-256zM292 90h4v2h-4zM312 90h12v2h-12zM344 90h4v2h-4zM386 90h10v2h-10zM408 90h8v2h-8zM418 90h6v2h-6zM432 90h16v2h-16zM458 90h2v2h-2zM472 90h4v2h-4zM480 90h4v2h-4zM500 90h2v2h-2zM0 92h256v2h-256zM312 92h10v2h-10zM344 92h8v2h-8zM386 92h2v2h-2zM392 92h4v2h-4zM408 92h8v2h-8zM418 92h2v2h-2zM424 92h12v2h-12zM440 92h8v2h-8zM454 92h2v2h-2zM458 92h2v2h-2zM464 92h4v2h-4zM482 92h4v2h-4zM0 94h256v2h-256zM288 94h6v2h-6zM312 94h10v2h-10zM344 94h8v2h-8zM386 94h2v2h-2zM392 94h4v2h-4zM408 94h8v2h-8zM418 94h2v2h-2zM424 94h12v2h-12zM440 94h8v2h-8zM454 94h2v2h-2zM458 94h2v2h-2zM464 94h4v2h-4zM490 94h4v2h-4zM0 96h264v2h-264zM268 96h4v2h-4zM284 96h4v2h-4zM330 96h4v2h-4zM388 96h16v2h-16zM408 96h8v2h-8zM420 96h4v2h-4zM432 96h12v2h-12zM448 96h4v2h-4zM454 96h6v2h-6zM478 96h2v2h-2zM484 96h4v2h-4zM0 98h264v2h-264zM268 98h4v2h-4zM284 98h4v2h-4zM336 98h2v2h-2zM388 98h16v2h-16zM408 98h8v2h-8zM420 98h4v2h-4zM432 98h12v2h-12zM448 98h4v2h-4zM454 98h6v2h-6zM478 98h2v2h-2zM484 98h4v2h-4zM498 98h2v2h-2zM0 100h264v2h-264zM268 100h4v2h-4zM284 100h4v2h-4zM296 100h4v2h-4zM324 100h4v2h-4zM336 100h4v2h-4zM384 100h16v2h-16zM402 100h14v2h-14zM420 100h4v2h-4zM426 100h10v2h-10zM478 100h2v2h-2zM484 100h4v2h-4zM0 102h264v2h-264zM268 102h4v2h-4zM284 102h4v2h-4zM296 102h8v2h-8zM324 102h4v2h-4zM336 102h4v2h-4zM384 102h16v2h-16zM408 102h8v2h-8zM420 102h4v2h-4zM428 102h8v2h-8zM484 102h4v2h-4zM0 104h32v2h-32zM40 104h216v2h-216zM260 104h4v2h-4zM288 104h8v2h-8zM384 104h16v2h-16zM416 104h4v2h-4zM428 104h20v2h-20zM468 104h4v2h-4zM500 104h2v2h-2zM0 106h32v2h-32zM40 106h216v2h-216zM260 106h6v2h-6zM288 106h8v2h-8zM340 106h2v2h-2zM384 106h16v2h-16zM416 106h4v2h-4zM428 106h20v2h-20zM468 106h4v2h-4zM496 106h6v2h-6zM0 108h36v2h-36zM40 108h216v2h-216zM260 108h6v2h-6zM268 108h4v2h-4zM288 108h8v2h-8zM336 108h6v2h-6zM372 108h2v2h-2zM384 108h16v2h-16zM428 108h12v2h-12zM448 108h12v2h-12zM472 108h4v2h-4zM0 110h36v2h-36zM40 110h216v2h-216zM260 110h4v2h-4zM268 110h4v2h-4zM288 110h8v2h-8zM336 110h4v2h-4zM372 110h2v2h-2zM384 110h16v2h-16zM428 110h12v2h-12zM448 110h12v2h-12zM472 110h4v2h-4zM0 112h36v2h-36zM40 112h216v2h-216zM356 112h4v2h-4zM404 112h4v2h-4zM420 112h4v2h-4zM436 112h4v2h-4zM444 112h4v2h-4zM484 112h4v2h-4zM0 114h36v2h-36zM40 114h216v2h-216zM322 114h4v2h-4zM354 114h6v2h-6zM404 114h4v2h-4zM420 114h4v2h-4zM430 114h2v2h-2zM436 114h4v2h-4zM448 114h2v2h-2zM472 114h6v2h-6zM484 114h6v2h-6zM0 116h32v2h-32zM40 116h216v2h-216zM320 116h4v2h-4zM348 116h2v2h-2zM354 116h2v2h-2zM360 116h8v2h-8zM384 116h6v2h-6zM392 116h8v2h-8zM420 116h4v2h-4zM428 116h4v2h-4zM436 116h4v2h-4zM444 116h6v2h-6zM452 116h4v2h-4zM488 116h2v2h-2zM498 116h2v2h-2zM0 118h32v2h-32zM40 118h216v2h-216zM320 118h4v2h-4zM348 118h2v2h-2zM360 118h8v2h-8zM384 118h6v2h-6zM392 118h8v2h-8zM420 118h4v2h-4zM428 118h4v2h-4zM436 118h4v2h-4zM444 118h6v2h-6zM452 118h4v2h-4zM458 118h6v2h-6zM488 118h2v2h-2zM0 120h32v2h-32zM40 120h32v2h-32zM80 120h176v2h-176zM264 120h4v2h-4zM276 120h8v2h-8zM380 120h12v2h-12zM396 120h4v2h-4zM424 120h12v2h-12zM492 120h4v2h-4zM498 120h4v2h-4zM0 122h32v2h-32zM40 122h32v2h-32zM80 122h176v2h-176zM264 122h8v2h-8zM276 122h8v2h-8zM380 122h4v2h-4zM388 122h4v2h-4zM396 122h4v2h-4zM402 122h2v2h-2zM416 122h4v2h-4zM424 122h4v2h-4zM432 122h4v2h-4zM450 122h6v2h-6zM492 122h4v2h-4zM500 122h2v2h-2zM0 124h32v2h-32zM40 124h32v2h-32zM80 124h176v2h-176zM258 124h6v2h-6zM280 124h4v2h-4zM296 124h8v2h-8zM380 124h4v2h-4zM396 124h4v2h-4zM402 124h10v2h-10zM420 124h4v2h-4zM432 124h4v2h-4zM460 124h8v2h-8zM472 124h12v2h-12zM0 126h32v2h-32zM40 126h32v2h-32zM80 126h176v2h-176zM258 126h6v2h-6zM280 126h4v2h-4zM296 126h8v2h-8zM380 126h4v2h-4zM396 126h4v2h-4zM402 126h10v2h-10zM420 126h4v2h-4zM432 126h4v2h-4zM460 126h8v2h-8zM472 126h12v2h-12zM0 128h256v2h-256zM300 128h4v2h-4zM336 128h4v2h-4zM384 128h4v2h-4zM408 128h2v2h-2zM412 128h4v2h-4zM0 130h256v2h-256zM336 130h4v2h-4zM384 130h4v2h-4zM408 130h2v2h-2zM412 130h4v2h-4zM0 132h256v2h-256zM316 132h4v2h-4zM328 132h4v2h-4zM340 132h2v2h-2zM408 132h2v2h-2zM0 134h256v2h-256zM316 134h4v2h-4zM340 134h2v2h-2zM388 134h4v2h-4zM0 136h256v2h-256zM488 136h4v2h-4zM500 136h2v2h-2zM0 138h256v2h-256zM488 138h4v2h-4zM500 138h2v2h-2zM0 140h256v2h-256zM488 140h4v2h-4zM500 140h2v2h-2zM0 142h256v2h-256zM488 142h4v2h-4zM500 142h2v2h-2zM0 144h264v2h-264zM280 144h4v2h-4zM300 144h4v2h-4zM308 144h4v2h-4zM320 144h4v2h-4zM328 144h8v2h-8zM368 144h12v2h-12zM392 144h4v2h-4zM488 144h8v2h-8zM0 146h264v2h-264zM280 146h4v2h-4zM300 146h4v2h-4zM306 146h6v2h-6zM328 146h8v2h-8zM358 146h2v2h-2zM368 146h12v2h-12zM392 146h4v2h-4zM488 146h8v2h-8zM0 148h264v2h-264zM300 148h4v2h-4zM324 148h8v2h-8zM358 148h2v2h-2zM372 148h4v2h-4zM392 148h4v2h-4zM492 148h4v2h-4zM0 150h264v2h-264zM284 150h4v2h-4zM300 150h4v2h-4zM324 150h8v2h-8zM358 150h2v2h-2zM372 150h4v2h-4zM378 150h4v2h-4zM392 150h4v2h-4zM492 150h4v2h-4zM0 152h256v2h-256zM324 152h4v2h-4zM0 154h256v2h-256zM296 154h6v2h-6zM324 154h4v2h-4zM0 156h256v2h-256zM296 156h4v2h-4zM324 156h4v2h-4zM0 158h256v2h-256zM296 158h4v2h-4zM324 158h4v2h-4zM0 160h256v2h-256zM320 160h8v2h-8zM352 160h8v2h-8zM384 160h4v2h-4zM392 160h4v2h-4zM456 160h16v2h-16zM480 160h8v2h-8zM0 162h256v2h-256zM320 162h8v2h-8zM352 162h8v2h-8zM384 162h4v2h-4zM392 162h4v2h-4zM456 162h16v2h-16zM480 162h8v2h-8zM0 164h256v2h-256zM320 164h8v2h-8zM352 164h8v2h-8zM386 164h2v2h-2zM398 164h2v2h-2zM456 164h8v2h-8zM468 164h4v2h-4zM480 164h8v2h-8zM0 166h256v2h-256zM320 166h8v2h-8zM352 166h8v2h-8zM398 166h2v2h-2zM456 166h8v2h-8zM468 166h4v2h-4zM480 166h8v2h-8zM0 168h256v2h-256zM448 168h16v2h-16zM480 168h16v2h-16zM0 170h256v2h-256zM448 170h16v2h-16zM480 170h16v2h-16zM0 172h256v2h-256zM448 172h16v2h-16zM484 172h12v2h-12zM0 174h256v2h-256zM448 174h16v2h-16zM484 174h12v2h-12zM0 176h256v2h-256zM328 176h2v2h-2zM480 176h16v2h-16zM0 178h256v2h-256zM328 178h2v2h-2zM480 178h16v2h-16zM0 180h256v2h-256zM264 180h4v2h-4zM328 180h4v2h-4zM480 180h4v2h-4zM488 180h8v2h-8zM0 182h256v2h-256zM264 182h4v2h-4zM328 182h4v2h-4zM480 182h4v2h-4zM488 182h8v2h-8zM0 184h256v2h-256zM388 184h4v2h-4zM400 184h4v2h-4zM408 184h4v2h-4zM480 184h8v2h-8zM0 186h256v2h-256zM388 186h4v2h-4zM398 186h6v2h-6zM408 186h4v2h-4zM480 186h8v2h-8zM0 188h256v2h-256zM380 188h4v2h-4zM388 188h8v2h-8zM398 188h6v2h-6zM408 188h4v2h-4zM452 188h2v2h-2zM464 188h8v2h-8zM484 188h4v2h-4zM0 190h256v2h-256zM380 190h4v2h-4zM388 190h8v2h-8zM400 190h4v2h-4zM408 190h4v2h-4zM452 190h2v2h-2zM464 190h8v2h-8zM484 190h4v2h-4zM0 192h256v2h-256zM404 192h4v2h-4zM480 192h8v2h-8zM0 194h256v2h-256zM404 194h4v2h-4zM480 194h8v2h-8zM0 196h256v2h-256zM432 196h4v2h-4zM480 196h8v2h-8zM0 198h256v2h-256zM480 198h8v2h-8zM0 200h256v2h-256zM456 200h16v2h-16zM0 202h256v2h-256zM456 202h16v2h-16zM0 204h256v2h-256zM400 204h4v2h-4zM416 204h4v2h-4zM432 204h8v2h-8zM456 204h16v2h-16zM0 206h256v2h-256zM400 206h4v2h-4zM416 206h4v2h-4zM432 206h8v2h-8zM456 206h16v2h-16zM0 208h256v2h-256zM398 208h2v2h-2zM444 208h20v2h-20zM496 208h6v2h-6zM0 210h256v2h-256zM398 210h2v2h-2zM426 210h2v2h-2zM444 210h20v2h-20zM496 210h6v2h-6zM0 212h256v2h-256zM396 212h4v2h-4zM426 212h6v2h-6zM442 212h4v2h-4zM452 212h12v2h-12zM496 212h6v2h-6zM0 214h256v2h-256zM396 214h4v2h-4zM426 214h6v2h-6zM452 214h12v2h-12zM496 214h6v2h-6zM0 216h256v2h-256zM448 216h8v2h-8zM480 216h22v2h-22zM0 218h256v2h-256zM448 218h8v2h-8zM480 218h22v2h-22zM0 220h256v2h-256zM448 220h8v2h-8zM480 220h8v2h-8zM492 220h10v2h-10zM0 222h256v2h-256zM448 222h8v2h-8zM480 222h8v2h-8zM492 222h10v2h-10zM0 224h256v2h-256zM304 224h8v2h-8zM0 226h256v2h-256zM304 226h8v2h-8zM434 226h2v2h-2zM0 228h256v2h-256zM304 228h8v2h-8zM434 228h2v2h-2zM0 230h256v2h-256zM304 230h8v2h-8zM0 232h256v2h-256zM428 232h4v2h-4zM0 234h256v2h-256zM428 234h4v2h-4zM0 236h260v2h-260zM264 236h2v2h-2zM0 238h260v2h-260zM264 238h2v2h-2zM0 240h256v2h-256zM0 242h256v2h-256zM0 244h256v2h-256zM0 246h256v2h-256zM0 248h256v2h-256zM312 248h8v2h-8zM0 250h256v2h-256zM312 250h8v2h-8zM0 252h256v2h-256zM312 252h8v2h-8zM0 254h256v2h-256zM312 254h14v2h-14zM0 256h480v2h-480zM488 256h8v2h-8zM0 258h480v2h-480zM488 258h8v2h-8zM0 260h480v2h-480zM488 260h8v2h-8zM0 262h480v2h-480zM488 262h8v2h-8zM0 264h488v2h-488zM0 266h488v2h-488zM0 268h488v2h-488zM0 270h488v2h-488zM0 272h480v2h-480zM0 274h480v2h-480zM0 276h480v2h-480zM0 278h480v2h-480zM0 280h480v2h-480zM488 280h14v2h-14zM0 282h480v2h-480zM488 282h14v2h-14zM0 284h480v2h-480zM488 284h14v2h-14zM0 286h480v2h-480zM488 286h14v2h-14zM0 288h488v2h-488zM0 290h488v2h-488zM0 292h488v2h-488zM0 294h488v2h-488zM0 296h472v2h-472zM480 296h22v2h-22zM0 298h472v2h-472zM480 298h22v2h-22zM0 300h472v2h-472zM480 300h22v2h-22zM0 302h472v2h-472zM480 302h22v2h-22zM0 304h464v2h-464zM480 304h8v2h-8zM0 306h464v2h-464zM480 306h8v2h-8zM0 308h464v2h-464zM480 308h8v2h-8zM0 310h464v2h-464zM480 310h8v2h-8zM0 312h48v2h-48zM64 312h400v2h-400zM472 312h8v2h-8zM496 312h6v2h-6zM0 314h48v2h-48zM64 314h400v2h-400zM472 314h8v2h-8zM496 314h6v2h-6zM0 316h48v2h-48zM64 316h400v2h-400zM472 316h8v2h-8zM496 316h6v2h-6zM0 318h48v2h-48zM64 318h400v2h-400zM472 318h8v2h-8zM496 318h6v2h-6zM0 320h502v2h-502zM0 322h502v2h-502zM0 324h502v2h-502zM0 326h502v2h-502zM0 328h502v2h-502zM0 330h502v2h-502zM0 332h502v2h-502zM0 334h502v2h-502zM0 336h502v2h-502zM0 338h502v2h-502zM0 340h502v2h-502zM0 342h502v2h-502zM0 344h502v2h-502zM0 346h502v2h-502zM0 348h502v2h-502zM0 350h502v2h-502zM0 352h502v2h-502zM0 354h502v2h-502zM0 356h502v2h-502zM0 358h502v2h-502zM0 360h502v2h-502zM0 362h502v2h-502zM0 364h502v2h-502zM0 366h502v2h-502zM0 368h502v2h-502zM0 370h502v2h-502zM0 372h502v2h-502zM0 374h502v2h-502zM0 376h502v2h-502zM0 378h502v2h-502zM0 380h502v2h-502zM0 382h502v2h-502zM0 384h502v2h-502zM0 386h502v2h-502zM0 388h502v2h-502zM0 390h502v2h-502zM0 392h502v2h-502zM0 394h502v2h-502zM0 396h502v2h-502zM0 398h502v2h-502zM0 400h502v2h-502zM0 402h502v2h-502zM0 404h502v2h-502zM0 406h502v2h-502zM0 408h502v2h-502zM0 410h502v2h-502zM0 412h502v2h-502zM0 414h502v2h-502zM0 416h502v2h-502zM0 418h502v2h-502zM0 420h502v2h-502zM0 422h502v2h-502zM0 424h502v2h-502zM0 426h502v2h-502zM0 428h502v2h-502zM0 430h502v2h-502zM0 432h502v2h-502zM0 434h502v2h-502zM0 436h502v2h-502zM0 438h502v2h-502zM0 440h502v2h-502zM0 442h502v2h-502zM0 444h502v2h-502zM0 446h502v2h-502zM0 448h502v2h-502zM0 450h502v2h-502zM0 452h502v2h-502zM0 454h502v2h-502zM0 456h502v2h-502zM0 458h502v2h-502zM0 460h502v2h-502zM0 462h502v2h-502zM0 464h502v2h-502zM0 466h502v2h-502zM0 468h502v2h-502zM0 470h502v2h-502zM0 472h502v2h-502zM0 474h502v2h-502zM0 476h502v2h-502zM0 478h502v2h-502zM0 480h502v2h-502zM0 482h502v2h-502zM0 484h502v2h-502zM0 486h502v2h-502zM0 488h502v2h-502zM0 490h502v2h-502zM0 492h502v2h-502zM0 494h502v2h-502zM0 496h502v2h-502zM0 498h502v2h-502zM0 500h502v2h-502zM0 502h502v2h-502zM0 504h502v2h-502zM0 506h502v2h-502z" fill="#143214"/><rect x="56" y="296" width="8" height="16" fill="#d4c43c"/></svg>
<div class="abs" style="left:1291px;top:332px;width:15px;height:517px;background:#ececec;border:1px solid #a8a8a8"></div>
<div class="abs" style="left:1291px;top:345px;width:15px;height:1px;background:#a8a8a8"></div>
<div class="abs" style="left:1291px;top:820px;width:15px;height:15px;background:#d6d6d6;border:1px solid #a8a8a8"></div>
<div class="abs" style="left:1291px;top:835px;width:15px;height:1px;background:#a8a8a8"></div>
<svg class="abs" style="left:1294px;top:336px" width="9" height="6"><path d="M0 5L4.5 0L9 5Z" fill="#777"/></svg>
<svg class="abs" style="left:1294px;top:839px" width="9" height="6"><path d="M0 0L4.5 5L9 0Z" fill="#111"/></svg>
<div class="abs" style="left:775px;top:853px;width:512px;height:15px;background:#ececec;border:1px solid #a8a8a8"></div>
<div class="abs" style="left:788px;top:853px;width:1px;height:15px;background:#a8a8a8"></div>
<div class="abs" style="left:1253px;top:853px;width:21px;height:15px;background:#d6d6d6;border:1px solid #a8a8a8"></div>
<svg class="abs" style="left:779px;top:856px" width="6" height="9"><path d="M5 0L0 4.5L5 9Z" fill="#777"/></svg>
<svg class="abs" style="left:1278px;top:856px" width="6" height="9"><path d="M0 0L5 4.5L0 9Z" fill="#111"/></svg>
<div class="abs" style="left:774px;top:870px;width:531px;height:1px;background:#b0b0b0"></div>
<div class="abs" style="left:775px;top:871px;width:512px;height:20px;overflow:hidden"><div class="t" style="left:0px;top:2.73px;font-size:14.5px;line-height:14.5px;color:#111;font-weight:normal;">VRAM 8.0 GB | Used 1857.8 MB (23%) | 3432 regions | debugfs (amdgpu_vram)</div></div>
<div class="abs" style="left:1301px;top:879px;width:2px;height:2px;background:#a9a9a9"></div>
<div class="abs" style="left:1301px;top:883px;width:2px;height:2px;background:#a9a9a9"></div>
<div class="abs" style="left:1297px;top:883px;width:2px;height:2px;background:#a9a9a9"></div>
<div class="abs" style="left:1301px;top:887px;width:2px;height:2px;background:#a9a9a9"></div>
<div class="abs" style="left:1297px;top:887px;width:2px;height:2px;background:#a9a9a9"></div>
<div class="abs" style="left:1293px;top:887px;width:2px;height:2px;background:#a9a9a9"></div>
<div class="abs" style="left:911px;top:668px;width:282px;height:134px;background:#ebebeb;border:1px solid #000"></div>
<div class="t" style="left:912.5px;top:670.64px;font-size:14.6px;line-height:14.6px;color:#111;font-weight:normal;">Region 91</div>
<div class="t" style="left:912.5px;top:689.64px;font-size:14.6px;line-height:14.6px;color:#111;font-weight:normal;">0x85200-0x85600</div>
<div class="t" style="left:912.5px;top:708.64px;font-size:14.6px;line-height:14.6px;color:#111;font-weight:normal;">USED</div>
<div class="t" style="left:912.5px;top:727.64px;font-size:14.6px;line-height:14.6px;color:#111;font-weight:normal;">4.00 MB</div>
<div class="t" style="left:912.5px;top:765.64px;font-size:14.6px;line-height:14.6px;color:#111;font-weight:normal;">Potential Owners (Heuristic match by size):</div>
<div class="t" style="left:912.5px;top:784.64px;font-size:14.6px;line-height:14.6px;color:#111;font-weight:normal;"> Xorg (PID 1208)  [2 BOs]</div>
<svg class="abs" style="left:845px;top:656px" width="16" height="22"><path d="M1.2 1.2L1.2 18.5L5.2 14.6L8.2 19.6L10.6 18.6L7.8 13.4L13 13.4Z" fill="#f4f4f4" stroke="#000" stroke-width="1.4" stroke-linejoin="miter"/></svg>
<div class="t" style="left:858.5px;top:594.51px;font-size:18.3px;line-height:18.3px;color:#f21a12;font-weight:normal;letter-spacing:0.5px;-webkit-text-stroke:0.55px #f21a12">This little bit is now</div>
<div class="t" style="left:858.5px;top:615.51px;font-size:18.3px;line-height:18.3px;color:#f21a12;font-weight:normal;letter-spacing:0.5px;-webkit-text-stroke:0.55px #f21a12">in the middle of the</div>
<div class="t" style="left:858.5px;top:636.51px;font-size:18.3px;line-height:18.3px;color:#f21a12;font-weight:normal;letter-spacing:0.5px;-webkit-text-stroke:0.55px #f21a12">free space.</div>
<div class="abs" style="left:773px;top:891px;width:534px;height:1px;background:#000"></div>
<div class="abs" style="left:1306px;top:273px;width:2px;height:618px;background:#000"></div>
<div class="abs" style="left:1386px;top:322px;width:534px;height:1px;background:#000"></div>
<div class="win" style="left:1386px;top:323px;width:534px;height:614px">
<div class="tb" style="height:22px"><div class="grip"><i style="left:0;top:0"></i><i style="left:6px;top:0"></i><i style="left:0;top:4px"></i><i style="left:6px;top:4px"></i></div></div>
<div class="t" style="left:135.5px;top:4.23px;font-size:13.9px;line-height:13.9px;color:#7d8791;font-weight:bold;">VRAM Hilbert Map (as superuser)</div>
<div class="abs" style="left:475px;top:14px;width:13px;height:3px;background:#7a7a7a"></div>
<div class="abs" style="left:496px;top:5px;width:13px;height:13px;border:2px solid #7a7a7a;border-top-width:3px"></div>
<svg class="abs" style="left:517px;top:5px" width="14" height="14"><path d="M1 1L13 13M13 1L1 13" stroke="#7a7a7a" stroke-width="2"/></svg>
<div class="abs" style="left:3px;top:24px;width:59px;height:27px;background:#ececec;border:1px solid #c0c0c0;border-bottom-color:#a0a0a0;border-right-color:#a8a8a8"></div>
<div class="t" style="left:7px;top:30.98px;font-size:14.2px;line-height:14.2px;color:#111;font-weight:normal;">Refresh</div>
<div class="t" style="left:78px;top:30.73px;font-size:14.5px;line-height:14.5px;color:#111;font-weight:normal;">debugfs (amdgpu_vram)</div>
<div class="abs" style="left:2px;top:56px;width:512px;height:517px;background:#1a1a1a"></div>
</div>
<svg class="abs" style="left:1398px;top:389px" width="502" height="507" shape-rendering="crispEdges"><rect width="502" height="507" fill="#22aaff"/><path d="M64 0h192v2h-192zM268 0h4v2h-4zM292 0h4v2h-4zM312 0h8v2h-8zM342 0h6v2h-6zM392 0h4v2h-4zM64 2h192v2h-192zM268 2h4v2h-4zM292 2h4v2h-4zM312 2h8v2h-8zM342 2h2v2h-2zM392 2h4v2h-4zM64 4h192v2h-192zM268 4h4v2h-4zM274 4h2v2h-2zM280 4h8v2h-8zM342 4h2v2h-2zM442 4h6v2h-6zM64 6h192v2h-192zM268 6h4v2h-4zM274 6h2v2h-2zM280 6h8v2h-8zM442 6h6v2h-6zM64 8h200v2h-200zM288 8h8v2h-8zM320 8h8v2h-8zM332 8h12v2h-12zM348 8h4v2h-4zM388 8h4v2h-4zM424 8h4v2h-4zM436 8h4v2h-4zM6 10h2v2h-2zM64 10h200v2h-200zM288 10h8v2h-8zM320 10h8v2h-8zM332 10h12v2h-12zM348 10h4v2h-4zM388 10h4v2h-4zM424 10h4v2h-4zM436 10h4v2h-4zM64 12h200v2h-200zM268 12h4v2h-4zM280 12h6v2h-6zM320 12h16v2h-16zM348 12h12v2h-12zM378 12h14v2h-14zM424 12h8v2h-8zM436 12h4v2h-4zM64 14h200v2h-200zM268 14h4v2h-4zM280 14h4v2h-4zM320 14h16v2h-16zM348 14h12v2h-12zM380 14h12v2h-12zM424 14h8v2h-8zM436 14h4v2h-4zM64 16h192v2h-192zM272 16h8v2h-8zM352 16h16v2h-16zM384 16h12v2h-12zM400 16h4v2h-4zM420 16h4v2h-4zM440 16h4v2h-4zM64 18h192v2h-192zM272 18h8v2h-8zM352 18h16v2h-16zM384 18h12v2h-12zM400 18h4v2h-4zM416 18h8v2h-8zM440 18h4v2h-4zM64 20h200v2h-200zM272 20h8v2h-8zM340 20h4v2h-4zM352 20h8v2h-8zM384 20h8v2h-8zM394 20h2v2h-2zM400 20h4v2h-4zM64 22h200v2h-200zM272 22h8v2h-8zM338 22h6v2h-6zM352 22h8v2h-8zM384 22h8v2h-8zM400 22h4v2h-4zM442 22h6v2h-6zM64 24h200v2h-200zM292 24h4v2h-4zM344 24h4v2h-4zM352 24h8v2h-8zM368 24h8v2h-8zM392 24h8v2h-8zM404 24h4v2h-4zM432 24h4v2h-4zM64 26h200v2h-200zM292 26h4v2h-4zM344 26h4v2h-4zM352 26h8v2h-8zM368 26h8v2h-8zM392 26h8v2h-8zM404 26h4v2h-4zM422 26h2v2h-2zM432 26h4v2h-4zM64 28h200v2h-200zM292 28h4v2h-4zM320 28h8v2h-8zM352 28h8v2h-8zM368 28h8v2h-8zM400 28h8v2h-8zM420 28h4v2h-4zM438 28h6v2h-6zM64 30h200v2h-200zM292 30h4v2h-4zM320 30h8v2h-8zM352 30h8v2h-8zM368 30h8v2h-8zM400 30h8v2h-8zM420 30h4v2h-4zM438 30h6v2h-6zM0 32h8v2h-8zM64 32h196v2h-196zM264 32h2v2h-2zM328 32h4v2h-4zM348 32h4v2h-4zM368 32h4v2h-4zM392 32h6v2h-6zM400 32h6v2h-6zM416 32h4v2h-4zM424 32h16v2h-16zM0 34h8v2h-8zM64 34h196v2h-196zM264 34h2v2h-2zM328 34h4v2h-4zM336 34h2v2h-2zM348 34h4v2h-4zM368 34h4v2h-4zM392 34h4v2h-4zM416 34h4v2h-4zM424 34h16v2h-16zM0 36h8v2h-8zM64 36h196v2h-196zM328 36h4v2h-4zM336 36h2v2h-2zM348 36h4v2h-4zM370 36h4v2h-4zM416 36h4v2h-4zM424 36h8v2h-8zM436 36h4v2h-4zM0 38h8v2h-8zM64 38h196v2h-196zM328 38h4v2h-4zM348 38h4v2h-4zM416 38h4v2h-4zM424 38h8v2h-8zM436 38h4v2h-4zM0 40h24v2h-24zM64 40h192v2h-192zM260 40h4v2h-4zM288 40h4v2h-4zM320 40h8v2h-8zM352 40h8v2h-8zM362 40h4v2h-4zM396 40h2v2h-2zM416 40h8v2h-8zM430 40h2v2h-2zM0 42h24v2h-24zM64 42h194v2h-194zM260 42h4v2h-4zM288 42h4v2h-4zM320 42h8v2h-8zM342 42h2v2h-2zM352 42h8v2h-8zM396 42h2v2h-2zM416 42h8v2h-8zM430 42h2v2h-2zM0 44h24v2h-24zM64 44h194v2h-194zM340 44h4v2h-4zM384 44h14v2h-14zM400 44h8v2h-8zM416 44h8v2h-8zM430 44h2v2h-2zM0 46h24v2h-24zM64 46h194v2h-194zM340 46h4v2h-4zM384 46h12v2h-12zM400 46h8v2h-8zM416 46h8v2h-8zM0 48h24v2h-24zM64 48h192v2h-192zM272 48h4v2h-4zM292 48h4v2h-4zM320 48h4v2h-4zM344 48h8v2h-8zM356 48h2v2h-2zM408 48h16v2h-16zM432 48h16v2h-16zM0 50h24v2h-24zM56 50h200v2h-200zM272 50h4v2h-4zM292 50h4v2h-4zM320 50h4v2h-4zM344 50h8v2h-8zM356 50h2v2h-2zM408 50h18v2h-18zM432 50h16v2h-16zM0 52h24v2h-24zM56 52h2v2h-2zM64 52h192v2h-192zM272 52h4v2h-4zM292 52h4v2h-4zM322 52h2v2h-2zM336 52h4v2h-4zM344 52h14v2h-14zM362 52h6v2h-6zM400 52h4v2h-4zM408 52h8v2h-8zM424 52h2v2h-2zM428 52h12v2h-12zM0 54h24v2h-24zM56 54h2v2h-2zM64 54h192v2h-192zM272 54h4v2h-4zM292 54h4v2h-4zM322 54h2v2h-2zM336 54h4v2h-4zM344 54h12v2h-12zM364 54h4v2h-4zM400 54h4v2h-4zM408 54h8v2h-8zM428 54h12v2h-12zM0 56h24v2h-24zM32 56h8v2h-8zM48 56h2v2h-2zM64 56h192v2h-192zM260 56h4v2h-4zM296 56h8v2h-8zM328 56h4v2h-4zM348 56h20v2h-20zM392 56h4v2h-4zM398 56h2v2h-2zM402 56h4v2h-4zM416 56h4v2h-4zM426 56h6v2h-6zM0 58h24v2h-24zM32 58h8v2h-8zM48 58h2v2h-2zM64 58h192v2h-192zM258 58h6v2h-6zM296 58h8v2h-8zM328 58h6v2h-6zM336 58h2v2h-2zM348 58h20v2h-20zM392 58h4v2h-4zM398 58h2v2h-2zM416 58h4v2h-4zM0 60h24v2h-24zM32 60h2v2h-2zM48 60h8v2h-8zM64 60h192v2h-192zM258 60h2v2h-2zM296 60h8v2h-8zM332 60h2v2h-2zM336 60h4v2h-4zM350 60h10v2h-10zM364 60h4v2h-4zM404 60h4v2h-4zM416 60h4v2h-4zM440 60h4v2h-4zM0 62h24v2h-24zM32 62h2v2h-2zM48 62h8v2h-8zM64 62h192v2h-192zM296 62h8v2h-8zM336 62h4v2h-4zM352 62h8v2h-8zM364 62h4v2h-4zM404 62h4v2h-4zM416 62h4v2h-4zM440 62h4v2h-4zM0 64h32v2h-32zM72 64h16v2h-16zM96 64h32v2h-32zM192 64h16v2h-16zM262 64h2v2h-2zM300 64h4v2h-4zM324 64h2v2h-2zM408 64h8v2h-8zM420 64h4v2h-4zM436 64h4v2h-4zM444 64h4v2h-4zM464 64h4v2h-4zM472 64h12v2h-12zM0 66h32v2h-32zM72 66h16v2h-16zM96 66h32v2h-32zM192 66h16v2h-16zM262 66h2v2h-2zM300 66h4v2h-4zM324 66h2v2h-2zM394 66h6v2h-6zM408 66h8v2h-8zM420 66h4v2h-4zM428 66h4v2h-4zM436 66h4v2h-4zM444 66h4v2h-4zM464 66h4v2h-4zM472 66h12v2h-12zM0 68h32v2h-32zM72 68h16v2h-16zM96 68h32v2h-32zM192 68h16v2h-16zM256 68h4v2h-4zM292 68h4v2h-4zM424 68h4v2h-4zM436 68h4v2h-4zM444 68h4v2h-4zM452 68h4v2h-4zM460 68h6v2h-6zM492 68h4v2h-4zM0 70h32v2h-32zM72 70h16v2h-16zM96 70h32v2h-32zM192 70h16v2h-16zM256 70h4v2h-4zM288 70h8v2h-8zM298 70h6v2h-6zM420 70h8v2h-8zM436 70h4v2h-4zM444 70h4v2h-4zM452 70h4v2h-4zM460 70h6v2h-6zM492 70h8v2h-8zM8 72h24v2h-24zM40 72h16v2h-16zM72 72h8v2h-8zM96 72h32v2h-32zM276 72h4v2h-4zM288 72h4v2h-4zM296 72h4v2h-4zM384 72h4v2h-4zM392 72h8v2h-8zM404 72h16v2h-16zM428 72h4v2h-4zM436 72h4v2h-4zM448 72h4v2h-4zM456 72h4v2h-4zM462 72h2v2h-2zM484 72h4v2h-4zM2 74h2v2h-2zM8 74h24v2h-24zM40 74h16v2h-16zM72 74h8v2h-8zM96 74h32v2h-32zM272 74h2v2h-2zM276 74h4v2h-4zM288 74h4v2h-4zM296 74h4v2h-4zM384 74h4v2h-4zM392 74h4v2h-4zM404 74h18v2h-18zM428 74h4v2h-4zM436 74h4v2h-4zM448 74h4v2h-4zM456 74h4v2h-4zM462 74h2v2h-2zM474 74h6v2h-6zM2 76h2v2h-2zM8 76h24v2h-24zM40 76h16v2h-16zM72 76h8v2h-8zM96 76h32v2h-32zM272 76h2v2h-2zM290 76h2v2h-2zM296 76h6v2h-6zM404 76h12v2h-12zM420 76h2v2h-2zM440 76h8v2h-8zM8 78h24v2h-24zM40 78h16v2h-16zM72 78h8v2h-8zM96 78h32v2h-32zM272 78h2v2h-2zM290 78h2v2h-2zM404 78h12v2h-12zM432 78h4v2h-4zM440 78h8v2h-8zM466 78h6v2h-6zM494 78h2v2h-2zM0 80h70v2h-70zM88 80h40v2h-40zM296 80h4v2h-4zM320 80h4v2h-4zM386 80h14v2h-14zM416 80h4v2h-4zM424 80h20v2h-20zM460 80h4v2h-4zM478 80h4v2h-4zM496 80h2v2h-2zM0 82h70v2h-70zM88 82h40v2h-40zM296 82h4v2h-4zM320 82h4v2h-4zM392 82h8v2h-8zM402 82h6v2h-6zM416 82h4v2h-4zM424 82h20v2h-20zM460 82h4v2h-4zM478 82h4v2h-4zM492 82h2v2h-2zM496 82h2v2h-2zM0 84h70v2h-70zM88 84h40v2h-40zM296 84h4v2h-4zM304 84h8v2h-8zM384 84h4v2h-4zM392 84h8v2h-8zM408 84h12v2h-12zM428 84h4v2h-4zM436 84h8v2h-8zM478 84h4v2h-4zM492 84h2v2h-2zM0 86h70v2h-70zM88 86h40v2h-40zM296 86h4v2h-4zM304 86h8v2h-8zM320 86h6v2h-6zM384 86h4v2h-4zM392 86h8v2h-8zM408 86h12v2h-12zM428 86h4v2h-4zM436 86h8v2h-8zM0 88h64v2h-64zM96 88h32v2h-32zM288 88h4v2h-4zM312 88h16v2h-16zM344 88h8v2h-8zM408 88h8v2h-8zM432 88h16v2h-16zM460 88h6v2h-6zM476 88h4v2h-4zM498 88h2v2h-2zM0 90h64v2h-64zM96 90h32v2h-32zM288 90h4v2h-4zM312 90h16v2h-16zM344 90h8v2h-8zM390 90h2v2h-2zM408 90h8v2h-8zM424 90h2v2h-2zM432 90h16v2h-16zM460 90h6v2h-6zM472 90h2v2h-2zM476 90h4v2h-4zM482 90h2v2h-2zM498 90h2v2h-2zM0 92h64v2h-64zM96 92h32v2h-32zM288 92h4v2h-4zM308 92h12v2h-12zM328 92h4v2h-4zM344 92h8v2h-8zM384 92h4v2h-4zM390 92h2v2h-2zM394 92h6v2h-6zM412 92h16v2h-16zM432 92h4v2h-4zM440 92h10v2h-10zM472 92h2v2h-2zM480 92h4v2h-4zM490 92h6v2h-6zM498 92h2v2h-2zM0 94h64v2h-64zM96 94h32v2h-32zM288 94h4v2h-4zM308 94h12v2h-12zM328 94h4v2h-4zM344 94h8v2h-8zM384 94h4v2h-4zM390 94h2v2h-2zM396 94h4v2h-4zM412 94h16v2h-16zM432 94h4v2h-4zM440 94h10v2h-10zM480 94h4v2h-4zM0 96h64v2h-64zM80 96h48v2h-48zM256 96h8v2h-8zM280 96h4v2h-4zM296 96h4v2h-4zM320 96h4v2h-4zM332 96h8v2h-8zM384 96h16v2h-16zM404 96h12v2h-12zM424 96h16v2h-16zM448 96h8v2h-8zM480 96h4v2h-4zM0 98h64v2h-64zM80 98h48v2h-48zM256 98h8v2h-8zM280 98h4v2h-4zM296 98h4v2h-4zM320 98h4v2h-4zM332 98h8v2h-8zM384 98h16v2h-16zM404 98h12v2h-12zM424 98h16v2h-16zM448 98h8v2h-8zM480 98h4v2h-4zM500 98h2v2h-2zM0 100h64v2h-64zM68 100h60v2h-60zM256 100h16v2h-16zM280 100h2v2h-2zM296 100h4v2h-4zM384 100h12v2h-12zM406 100h6v2h-6zM420 100h4v2h-4zM432 100h8v2h-8zM444 100h4v2h-4zM456 100h8v2h-8zM476 100h8v2h-8zM498 100h4v2h-4zM0 102h64v2h-64zM68 102h60v2h-60zM256 102h8v2h-8zM268 102h4v2h-4zM280 102h2v2h-2zM296 102h4v2h-4zM338 102h6v2h-6zM384 102h12v2h-12zM406 102h6v2h-6zM420 102h4v2h-4zM432 102h8v2h-8zM444 102h4v2h-4zM456 102h8v2h-8zM480 102h4v2h-4zM0 104h64v2h-64zM80 104h48v2h-48zM288 104h8v2h-8zM336 104h4v2h-4zM384 104h12v2h-12zM420 104h4v2h-4zM428 104h8v2h-8zM444 104h12v2h-12zM468 104h4v2h-4zM496 104h4v2h-4zM0 106h64v2h-64zM80 106h48v2h-48zM288 106h8v2h-8zM336 106h4v2h-4zM384 106h12v2h-12zM420 106h4v2h-4zM428 106h8v2h-8zM444 106h16v2h-16zM468 106h4v2h-4zM476 106h2v2h-2zM496 106h4v2h-4zM0 108h64v2h-64zM80 108h48v2h-48zM258 108h14v2h-14zM288 108h4v2h-4zM336 108h4v2h-4zM372 108h4v2h-4zM384 108h16v2h-16zM420 108h6v2h-6zM432 108h14v2h-14zM476 108h2v2h-2zM496 108h4v2h-4zM0 110h64v2h-64zM80 110h48v2h-48zM260 110h12v2h-12zM288 110h4v2h-4zM336 110h4v2h-4zM372 110h4v2h-4zM384 110h16v2h-16zM420 110h6v2h-6zM432 110h8v2h-8zM476 110h2v2h-2zM496 110h4v2h-4zM0 112h64v2h-64zM72 112h56v2h-56zM324 112h4v2h-4zM356 112h4v2h-4zM362 112h2v2h-2zM388 112h8v2h-8zM400 112h8v2h-8zM416 112h8v2h-8zM432 112h4v2h-4zM0 114h64v2h-64zM72 114h56v2h-56zM324 114h4v2h-4zM352 114h2v2h-2zM356 114h4v2h-4zM362 114h2v2h-2zM388 114h8v2h-8zM400 114h8v2h-8zM416 114h8v2h-8zM432 114h4v2h-4zM440 114h4v2h-4zM458 114h2v2h-2zM494 114h4v2h-4zM0 116h64v2h-64zM72 116h56v2h-56zM326 116h2v2h-2zM346 116h4v2h-4zM352 116h2v2h-2zM360 116h4v2h-4zM392 116h4v2h-4zM424 116h10v2h-10zM440 116h4v2h-4zM448 116h8v2h-8zM458 116h2v2h-2zM476 116h4v2h-4zM484 116h4v2h-4zM494 116h4v2h-4zM0 118h64v2h-64zM72 118h56v2h-56zM352 118h2v2h-2zM360 118h4v2h-4zM384 118h6v2h-6zM392 118h4v2h-4zM424 118h10v2h-10zM440 118h4v2h-4zM448 118h8v2h-8zM458 118h2v2h-2zM476 118h4v2h-4zM484 118h4v2h-4zM494 118h2v2h-2zM0 120h64v2h-64zM80 120h48v2h-48zM284 120h4v2h-4zM378 120h6v2h-6zM408 120h8v2h-8zM420 120h4v2h-4zM432 120h4v2h-4zM450 120h4v2h-4zM476 120h4v2h-4zM492 120h4v2h-4zM0 122h64v2h-64zM80 122h48v2h-48zM268 122h4v2h-4zM276 122h2v2h-2zM282 122h6v2h-6zM378 122h6v2h-6zM408 122h8v2h-8zM420 122h4v2h-4zM432 122h4v2h-4zM476 122h4v2h-4zM482 122h2v2h-2zM490 122h8v2h-8zM0 124h64v2h-64zM80 124h48v2h-48zM256 124h8v2h-8zM268 124h4v2h-4zM276 124h2v2h-2zM282 124h2v2h-2zM296 124h8v2h-8zM384 124h12v2h-12zM400 124h4v2h-4zM424 124h4v2h-4zM432 124h4v2h-4zM476 124h4v2h-4zM482 124h2v2h-2zM490 124h2v2h-2zM496 124h2v2h-2zM500 124h2v2h-2zM0 126h64v2h-64zM80 126h48v2h-48zM256 126h8v2h-8zM268 126h4v2h-4zM276 126h2v2h-2zM282 126h2v2h-2zM296 126h8v2h-8zM384 126h14v2h-14zM400 126h4v2h-4zM420 126h16v2h-16zM460 126h4v2h-4zM468 126h4v2h-4zM476 126h4v2h-4zM482 126h2v2h-2zM496 126h2v2h-2zM500 126h2v2h-2zM300 128h4v2h-4zM384 128h4v2h-4zM412 128h4v2h-4zM300 130h4v2h-4zM384 130h4v2h-4zM412 130h4v2h-4zM316 132h4v2h-4zM336 132h8v2h-8zM386 132h2v2h-2zM316 134h4v2h-4zM330 134h14v2h-14zM488 136h4v2h-4zM488 138h4v2h-4zM256 144h8v2h-8zM298 144h6v2h-6zM308 144h4v2h-4zM320 144h4v2h-4zM328 144h8v2h-8zM376 144h4v2h-4zM396 144h4v2h-4zM256 146h8v2h-8zM308 146h4v2h-4zM320 146h4v2h-4zM328 146h8v2h-8zM352 146h6v2h-6zM376 146h4v2h-4zM396 146h4v2h-4zM256 148h8v2h-8zM280 148h8v2h-8zM300 148h4v2h-4zM306 148h4v2h-4zM320 148h4v2h-4zM328 148h4v2h-4zM376 148h4v2h-4zM394 148h2v2h-2zM256 150h8v2h-8zM280 150h8v2h-8zM300 150h4v2h-4zM320 150h4v2h-4zM328 150h4v2h-4zM376 150h4v2h-4zM394 150h2v2h-2zM104 152h8v2h-8zM296 152h4v2h-4zM104 154h8v2h-8zM296 154h4v2h-4zM104 156h8v2h-8zM298 156h2v2h-2zM322 156h6v2h-6zM104 158h8v2h-8zM324 158h4v2h-4zM320 160h8v2h-8zM352 160h8v2h-8zM384 160h2v2h-2zM392 160h4v2h-4zM320 162h8v2h-8zM352 162h8v2h-8zM384 162h2v2h-2zM392 162h4v2h-4zM320 164h8v2h-8zM352 164h8v2h-8zM384 164h4v2h-4zM392 164h4v2h-4zM320 166h8v2h-8zM352 166h8v2h-8zM384 166h4v2h-4zM392 166h4v2h-4zM268 176h4v2h-4zM328 176h8v2h-8zM268 178h4v2h-4zM328 178h8v2h-8zM378 184h2v2h-2zM388 184h8v2h-8zM404 184h4v2h-4zM412 184h4v2h-4zM468 184h4v2h-4zM378 186h2v2h-2zM388 186h8v2h-8zM398 186h2v2h-2zM404 186h4v2h-4zM412 186h4v2h-4zM468 186h4v2h-4zM378 188h2v2h-2zM388 188h4v2h-4zM398 188h2v2h-2zM404 188h4v2h-4zM412 188h4v2h-4zM448 188h4v2h-4zM388 190h4v2h-4zM404 190h4v2h-4zM412 190h4v2h-4zM448 190h4v2h-4zM404 194h4v2h-4zM432 194h2v2h-2zM432 196h2v2h-2zM432 198h2v2h-2zM464 200h8v2h-8zM422 202h2v2h-2zM464 202h8v2h-8zM404 204h4v2h-4zM422 204h2v2h-2zM432 204h4v2h-4zM464 204h8v2h-8zM404 206h4v2h-4zM422 206h2v2h-2zM432 206h4v2h-4zM464 206h8v2h-8zM112 208h8v2h-8zM424 208h4v2h-4zM442 208h4v2h-4zM496 208h6v2h-6zM112 210h8v2h-8zM396 210h2v2h-2zM496 210h6v2h-6zM112 212h8v2h-8zM396 212h4v2h-4zM440 212h4v2h-4zM496 212h6v2h-6zM112 214h8v2h-8zM396 214h4v2h-4zM440 214h4v2h-4zM496 214h6v2h-6zM112 216h8v2h-8zM448 216h8v2h-8zM480 216h8v2h-8zM112 218h8v2h-8zM448 218h8v2h-8zM480 218h8v2h-8zM112 220h8v2h-8zM448 220h8v2h-8zM480 220h8v2h-8zM112 222h8v2h-8zM448 222h8v2h-8zM480 222h8v2h-8zM304 224h8v2h-8zM424 224h4v2h-4zM304 226h8v2h-8zM424 226h4v2h-4zM304 228h8v2h-8zM432 228h2v2h-2zM304 230h8v2h-8zM432 230h2v2h-2zM268 232h4v2h-4zM256 234h2v2h-2zM268 234h4v2h-4zM256 236h2v2h-2zM424 236h4v2h-4zM256 238h2v2h-2zM424 238h4v2h-4zM48 248h8v2h-8zM312 248h12v2h-12zM48 250h8v2h-8zM312 250h12v2h-12zM48 252h8v2h-8zM312 252h4v2h-4zM48 254h8v2h-8zM312 254h4v2h-4zM392 256h40v2h-40zM488 256h8v2h-8zM392 258h40v2h-40zM488 258h8v2h-8zM392 260h40v2h-40zM488 260h8v2h-8zM392 262h40v2h-40zM488 262h8v2h-8zM392 264h40v2h-40zM480 264h8v2h-8zM392 266h40v2h-40zM480 266h8v2h-8zM392 268h40v2h-40zM480 268h8v2h-8zM392 270h40v2h-40zM480 270h8v2h-8zM412 272h8v2h-8zM48 320h8v2h-8zM48 322h8v2h-8zM48 324h8v2h-8zM48 326h8v2h-8z" fill="#143214"/><path d="M160 192h32v64h16v-16h-16v-48z M160 192h16v16h-16z" fill="none"/><rect x="160" y="192" width="32" height="16" fill="#d4c43c"/><rect x="176" y="208" width="16" height="16" fill="#d4c43c"/><rect x="160" y="224" width="32" height="32" fill="#d4c43c"/><rect x="192" y="240" width="16" height="16" fill="#d4c43c"/></svg>
<div class="abs" style="left:1904px;top:379px;width:15px;height:517px;background:#ececec;border:1px solid #a8a8a8"></div>
<div class="abs" style="left:1904px;top:392px;width:15px;height:1px;background:#a8a8a8"></div>
<div class="abs" style="left:1904px;top:867px;width:15px;height:15px;background:#d6d6d6;border:1px solid #a8a8a8"></div>
<div class="abs" style="left:1904px;top:882px;width:15px;height:1px;background:#a8a8a8"></div>
<svg class="abs" style="left:1907px;top:383px" width="9" height="6"><path d="M0 5L4.5 0L9 5Z" fill="#777"/></svg>
<svg class="abs" style="left:1907px;top:886px" width="9" height="6"><path d="M0 0L4.5 5L9 0Z" fill="#111"/></svg>
<div class="abs" style="left:1388px;top:900px;width:512px;height:15px;background:#ececec;border:1px solid #a8a8a8"></div>
<div class="abs" style="left:1401px;top:900px;width:1px;height:15px;background:#a8a8a8"></div>
<div class="abs" style="left:1866px;top:900px;width:21px;height:15px;background:#d6d6d6;border:1px solid #a8a8a8"></div>
<svg class="abs" style="left:1392px;top:903px" width="6" height="9"><path d="M5 0L0 4.5L5 9Z" fill="#777"/></svg>
<svg class="abs" style="left:1891px;top:903px" width="6" height="9"><path d="M0 0L5 4.5L0 9Z" fill="#111"/></svg>
<div class="abs" style="left:1387px;top:917px;width:532px;height:1px;background:#b0b0b0"></div>
<div class="abs" style="left:1388px;top:918px;width:512px;height:20px;overflow:hidden"><div class="t" style="left:0px;top:2.73px;font-size:14.5px;line-height:14.5px;color:#111;font-weight:normal;">VRAM 8.0 GB | Used 1857.8 MB (23%) | 3432 regions | debugfs (amdgpu_vram)</div></div>
<div class="abs" style="left:1915px;top:925px;width:2px;height:2px;background:#a9a9a9"></div>
<div class="abs" style="left:1915px;top:929px;width:2px;height:2px;background:#a9a9a9"></div>
<div class="abs" style="left:1911px;top:929px;width:2px;height:2px;background:#a9a9a9"></div>
<div class="abs" style="left:1915px;top:933px;width:2px;height:2px;background:#a9a9a9"></div>
<div class="abs" style="left:1911px;top:933px;width:2px;height:2px;background:#a9a9a9"></div>
<div class="abs" style="left:1907px;top:933px;width:2px;height:2px;background:#a9a9a9"></div>
<div class="abs" style="left:1616px;top:663px;width:282px;height:134px;background:#ebebeb;border:1px solid #000"></div>
<div class="t" style="left:1617.5px;top:665.64px;font-size:14.6px;line-height:14.6px;color:#111;font-weight:normal;">Region 118</div>
<div class="t" style="left:1617.5px;top:684.64px;font-size:14.6px;line-height:14.6px;color:#111;font-weight:normal;">0x57800-0x5b800</div>
<div class="t" style="left:1617.5px;top:703.64px;font-size:14.6px;line-height:14.6px;color:#111;font-weight:normal;">USED</div>
<div class="t" style="left:1617.5px;top:722.64px;font-size:14.6px;line-height:14.6px;color:#111;font-weight:normal;">64.00 MB</div>
<div class="t" style="left:1617.5px;top:760.64px;font-size:14.6px;line-height:14.6px;color:#111;font-weight:normal;">Potential Owners (Heuristic match by size):</div>
<div class="t" style="left:1617.5px;top:779.64px;font-size:14.6px;line-height:14.6px;color:#111;font-weight:normal;"> llava (PID 436756)  [1 BOs]</div>
<svg class="abs" style="left:1586px;top:636px" width="16" height="22"><path d="M1.2 1.2L1.2 18.5L5.2 14.6L8.2 19.6L10.6 18.6L7.8 13.4L13 13.4Z" fill="#f4f4f4" stroke="#000" stroke-width="1.4" stroke-linejoin="miter"/></svg>
<div class="abs" style="left:1897px;top:670px;width:3px;height:10px;background:#143214"></div>
<div class="abs" style="left:1897px;top:686px;width:3px;height:8px;background:#143214"></div>
<div class="abs" style="left:1897px;top:702px;width:3px;height:8px;background:#143214"></div>
<div class="abs" style="left:1386px;top:937px;width:534px;height:4px;background:#000"></div>
<div class="abs" style="left:1386px;top:941px;width:530px;height:1px;background:#bdbdbd"></div>
<div class="abs" style="left:1386px;top:942px;width:534px;height:3px;background:#000"></div>
<div class="abs" style="left:1690px;top:943px;width:230px;height:2px;background:#d8d8d8"></div>
<div class="abs" style="left:1749px;top:943px;width:83px;height:2px;background:#2c5aa0"></div></body></html>
